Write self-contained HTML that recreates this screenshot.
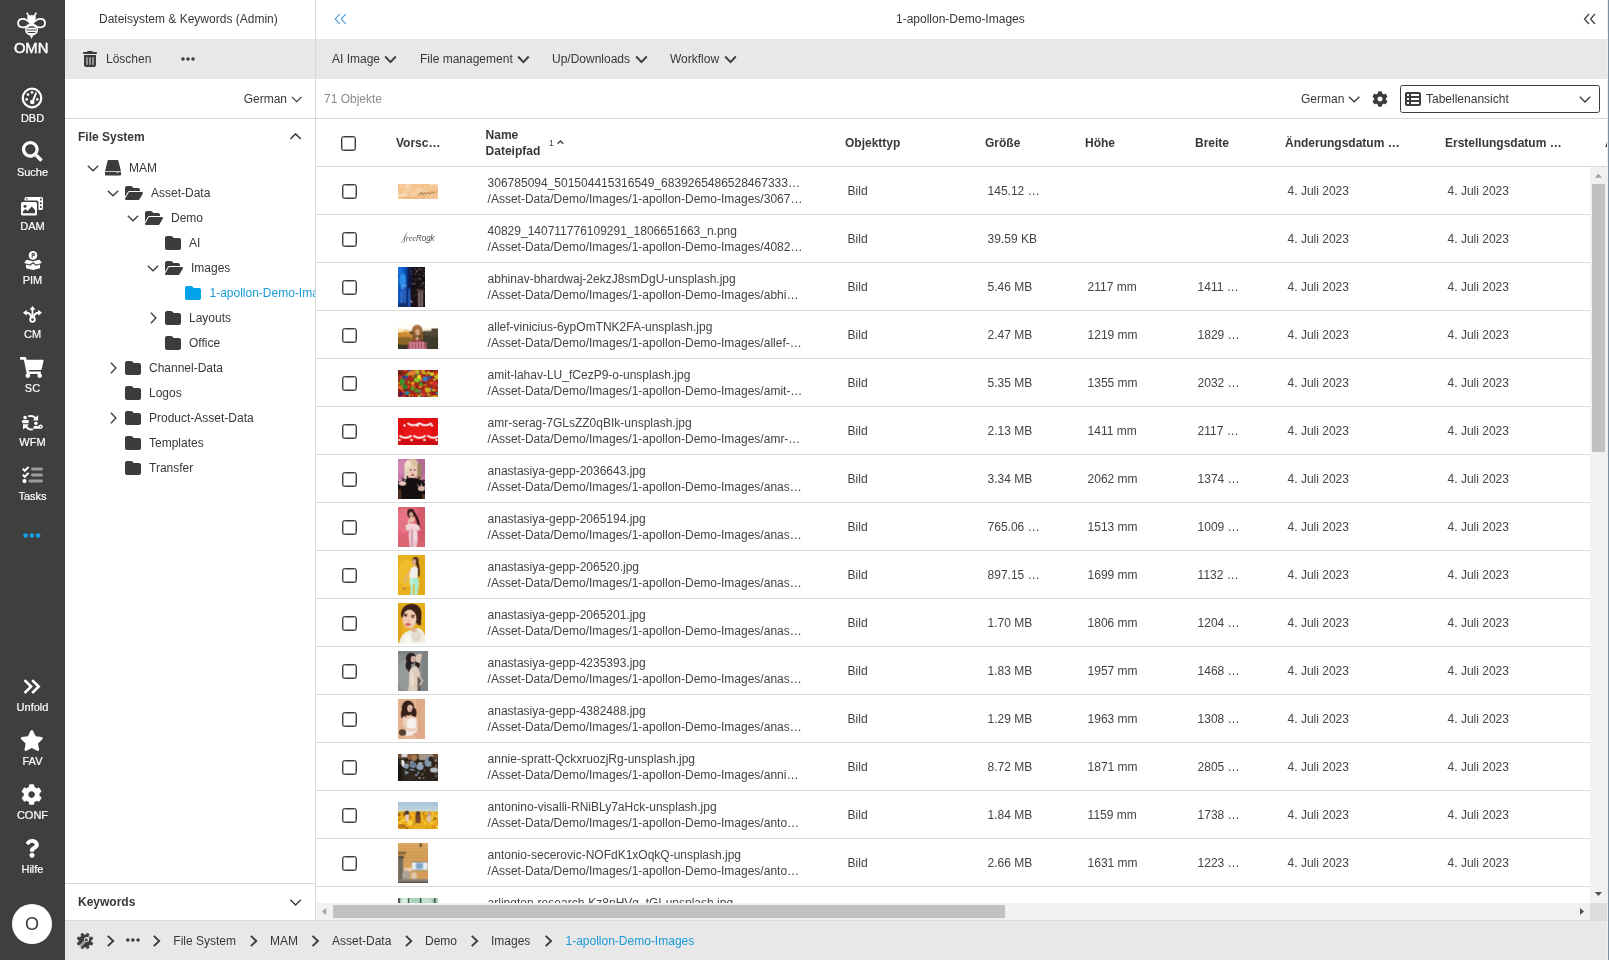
<!DOCTYPE html><html><head><meta charset="utf-8"><title>OMN</title><style>
*{box-sizing:border-box;margin:0;padding:0}
html,body{width:1609px;height:960px;overflow:hidden;background:#fff}
body{font-family:"Liberation Sans",sans-serif;font-size:12px;color:#383838;position:relative;will-change:transform}
.abs{position:absolute}
#sb{position:absolute;left:0;top:0;width:65px;height:960px;background:#3f3f3f;color:#fff}
#sb .it{position:absolute;left:0;width:65px;text-align:center;font-size:11px;line-height:12px;color:#fff;-webkit-text-stroke:0.2px #fff}
#lp{position:absolute;left:65px;top:0;width:251px;height:921px;background:#fff;border-right:1px solid #d9d9d9;overflow:hidden}
.gbar{position:absolute;background:#e8e8e8}
.hl{position:absolute;height:1px;background:#d9d9d9}
.t{position:absolute;white-space:nowrap;line-height:14px}
.b{font-weight:bold}
svg{position:absolute;overflow:visible}
#main{position:absolute;left:316px;top:0;width:1293px;height:921px}
#redge{position:absolute;left:1607px;top:0;width:2px;height:960px;background:#7d909e;border-left:1px solid #ebf0f3}
#tbl{position:absolute;left:316px;top:119px;width:1293px;height:802px;overflow:hidden}
#thead{position:absolute;left:0;top:0;width:1291px;overflow:hidden;height:48px;border-bottom:1px solid #d9d9d9}
#tbody{position:absolute;left:0;top:48px;width:1274px;height:736px;overflow:hidden}
.row{position:absolute;left:0;width:1274px;height:48px;border-bottom:1px solid #d9d9d9}
.cb{position:absolute;left:26px;top:17px;width:15px;height:15px;border:1px solid #3c3c3c;border-radius:2.500px;background:#fff;box-shadow:inset 0 0 0 .45px #4a4a4a}
.nm{position:absolute;left:171.600px;top:8px;color:#444;line-height:16px;white-space:nowrap}
.c{position:absolute;top:17px;color:#444;line-height:14px;white-space:nowrap}
.ot{left:531.600px}.sz{left:671.600px}.ho{left:771.600px}.br{left:881.600px}.d1{left:971.600px}.d2{left:1131.600px}
.th{position:absolute;background-size:cover}
#bc{position:absolute;left:65px;top:921px;width:1544px;height:39px;background:#e8e8e8}
.blue{color:#1a9ad6}

</style></head><body>
<svg style="left:0;top:0;width:0;height:0"><defs><filter id="bl" x="-10%" y="-10%" width="120%" height="120%"><feGaussianBlur stdDeviation="0.75"/></filter><filter id="bls" x="-10%" y="-10%" width="120%" height="120%"><feGaussianBlur stdDeviation="0.5"/></filter><filter id="bl2"><feGaussianBlur stdDeviation="0.3"/></filter></defs></svg>
<div id="sb">
<svg viewBox="0 0 40 50" style="left:12px;top:8px;width:40px;height:50px" fill="none" stroke="#fff">
<path d="M15.100 5.100L16.700 8M24 5.100L22.400 8" stroke-width="1.600" stroke-linecap="round"/>
<path d="M15.300 8.400C15.300 6.700 23.800 6.700 23.800 8.400C24.200 11.300 22.600 13.600 19.550 15.700C16.500 13.600 14.900 11.300 15.300 8.400z" fill="#fff" stroke="none"/>
<path d="M19 16.100C16 12.200 13.200 10.800 10.800 10.800C8 10.800 6.100 12.600 6.100 15.100C6.100 17.600 8 19.400 10.800 19.400C13.500 19.400 16.500 18.600 19 16.100z" stroke-width="1.800"/>
<path d="M20.100 16.100C23.100 12.200 25.900 10.800 28.300 10.800C31.100 10.800 33 12.600 33 15.100C33 17.600 31.100 19.400 28.300 19.400C25.600 19.400 22.600 18.600 20.100 16.100z" stroke-width="1.800"/>
<path d="M19.550 16.200C16 16.500 13.800 18.700 13.800 21.500C13.800 24.500 16 26.500 19.550 27.200C23.100 26.500 25.300 24.500 25.300 21.500C25.300 18.700 23.100 16.500 19.550 16.200z" stroke-width="1.500"/>
<path d="M17.700 17.100h3.700v1.100h-3.700zM15 19.800h9.100v1.600H15zM15 22.400h9.100v1.600H15zM16.300 25h6.500v1.500h-6.500zM17.900 27.200h3.300L19.550 30.900z" fill="#fff" stroke="none"/>
</svg>
<svg viewBox="0 0 40 14" style="left:12px;top:41px;width:40px;height:14px"><text x="1.900" y="11.700" font-family="Liberation Sans" font-size="14.300" fill="#fff" stroke="#fff" stroke-width=".45" textLength="34.400" lengthAdjust="spacingAndGlyphs">OMN</text></svg>
<svg viewBox="0 0 22 22" style="left:21px;top:86.500px;width:22px;height:22px" fill="#fff">
<circle cx="11" cy="11" r="9.300" fill="none" stroke="#fff" stroke-width="2.200"/>
<circle cx="5.600" cy="12.400" r="1.300"/><circle cx="7" cy="7.600" r="1.300"/><circle cx="11" cy="5.400" r="1.300"/><circle cx="16.300" cy="12.400" r="1.300"/>
<path d="M14.300 5.300l1.800.8-3.300 8.300-1.900-.7z"/><circle cx="11.300" cy="15" r="2.300"/>
</svg>
<svg viewBox="0 0 512 512" style="left:21.6px;top:141.2px;width:20.50px;height:20.5px"><path fill="#fff" d="M505 442.7L405.3 343c-4.500-4.500-10.600-7-17-7H372c27.600-35.300 44-79.700 44-128C416 93.100 322.900 0 208 0S0 93.100 0 208s93.100 208 208 208c48.300 0 92.700-16.400 128-44v16.300c0 6.400 2.500 12.500 7 17l99.700 99.700c9.400 9.400 24.600 9.400 33.900 0l28.300-28.300c9.400-9.400 9.400-24.600.1-34zM208 336c-70.700 0-128-57.200-128-128 0-70.700 57.200-128 128-128 70.700 0 128 57.200 128 128 0 70.700-57.200 128-128 128z"/></svg>
<svg viewBox="0 0 22 19" style="left:21px;top:197px;width:22px;height:19px" fill="#fff">
<path d="M5.200 0h15.100c.9 0 1.700.8 1.700 1.700v9.600c0 .9-.8 1.700-1.700 1.700H17.500V5.300c0-1-.8-1.800-1.800-1.800H3.500V1.700C3.500.8 4.300 0 5.200 0z"/>
<path d="M4.900 1.200h1.600v1.400H4.900zM19 1.500h1.600v2H19zM19 5.200h1.600v2H19zM19 8.900h1.600v2H19z" fill="#3f3f3f"/>
<rect x="0" y="5" width="16" height="13.500" rx="1.600"/>
<circle cx="4" cy="9.200" r="1.500" fill="#3f3f3f"/>
<path d="M1.900 16.300v-1.800l2.600-2.600 2 2 4.300-4.300 3.300 3.300v3.400z" fill="#3f3f3f"/>
</svg>
<svg viewBox="0 0 18 19" style="left:23.500px;top:250.500px;width:18px;height:19px" fill="#fff">
<circle cx="9" cy="4.400" r="4.300"/>
<path d="M7.700 6.700V2.100h1.800c1 0 1.600.6 1.600 1.500s-.6 1.500-1.600 1.500h-.8v1.600zm1-2.400h.7c.4 0 .7-.2.700-.7s-.3-.7-.7-.7h-.7z" fill="#3f3f3f"/>
<path d="M2.400 8.800l6.600 1.400 6.600-1.400 2.200 3.200-5.600 1.600L9 11l-3.200 2.600L.2 12z"/>
<path d="M2 13.600l4.200 1.200L9 12.500l2.800 2.300 4.200-1.200v3.600L9 19l-7-1.800z"/>
</svg>
<svg viewBox="0 0 19 17" style="left:22.500px;top:306px;width:19px;height:17px" fill="none" stroke="#fff" stroke-width="1.900">
<circle cx="9.500" cy="13.600" r="2.300"/>
<path d="M9.500 11.200V3"/>
<path d="M8.300 11.500C8 8.500 6.500 6.800 3 6.800M10.700 11.500c.3-3 1.800-4.700 5.300-4.700"/>
<path d="M9.500 0l3 3.800h-6zM0 6.800l3.800-3v6zM19 6.800l-3.800-3v6z" fill="#fff" stroke="none"/>
</svg>
<svg viewBox="0 0 576 512" style="left:20px;top:357px;width:23.62px;height:21px"><path fill="#fff" d="M528.12 301.319l47.273-208C578.806 78.301 567.391 64 551.990 64H159.208l-9.166-44.810C147.758 8.021 137.930 0 126.529 0H24C10.745 0 0 10.745 0 24v16c0 13.255 10.745 24 24 24h69.883l70.248 343.435C147.325 417.100 136 435.222 136 456c0 30.928 25.072 56 56 56s56-25.072 56-56c0-15.674-6.447-29.835-16.824-40h209.647C430.447 426.165 424 440.326 424 456c0 30.928 25.072 56 56 56s56-25.072 56-56c0-22.172-12.888-41.332-31.579-50.405l5.517-24.276c3.413-15.018-8.002-29.319-23.403-29.319H218.117l-6.545-32h293.145c11.206 0 20.920-7.754 23.403-18.681z"/></svg>
<svg viewBox="0 0 20.400 15.400" style="left:21.800px;top:414.600px;width:20.400px;height:15.400px" fill="#fff">
<circle cx="3.100" cy="2.600" r="1.800"/>
<rect x="0" y="5" width="6.800" height="3.300" rx="1.200"/>
<path d="M1 9.200h5.900L5.200 10.900c1.100 2 3.200 2.900 5.700 2.500l.3 1.900c-3.300.6-6.100-.6-7.500-2.900L1 14.600z"/>
<path d="M16.200.1v5.500l-5.300-.3 1.700-1.700C11.200 2 9 1.500 6.600 2.400L5.800.6c3.200-1.200 6.200-.5 8.200 1.600z"/>
<circle cx="13.900" cy="8.200" r="1.750"/>
<path d="M11.300 13.800v-1c0-1.200 1-2.100 2.100-2.100h1c.8 0 1.500.4 1.800 1 .3-1.200 1.300-2.100 2.400-2.100 1.200 0 2.200 1 2.200 2.200 0 1.100-.9 2-2.200 2z"/>
<circle cx="18.600" cy="11.800" r=".7" fill="#3f3f3f"/>
</svg>
<svg viewBox="0 0 21 18" style="left:21.500px;top:466px;width:21px;height:18px">
<g fill="#9c9c9c"><rect x="9" y="1.600" width="12" height="2.800" rx="1.400"/><rect x="9" y="7.600" width="12" height="2.800" rx="1.400"/><rect x="6.500" y="13.600" width="14.500" height="2.800" rx="1.400"/></g>
<g fill="none" stroke="#fff" stroke-width="2" ><path d="M.8 2.800l2 2L6.600.9"/><path d="M.8 8.800l2 2 3.800-3.900"/></g>
<circle cx="2.500" cy="15.100" r="2.100" fill="#fff"/>
</svg>
<svg viewBox="0 0 18 5" style="left:23px;top:533px;width:18px;height:5px" fill="#18a0e6"><circle cx="2.600" cy="2.500" r="2.350"/><circle cx="8.850" cy="2.500" r="2.350"/><circle cx="15.100" cy="2.500" r="2.350"/></svg>
<svg viewBox="0 0 18 16" style="left:22.900px;top:678.700px;width:17.400px;height:15.200px" fill="none" stroke="#fff" stroke-width="2.800"><path d="M1.500 1.200l6.800 6.800-6.800 6.800M9.500 1.200l6.800 6.800-6.800 6.800"/></svg>
<svg viewBox="0 0 576 512" style="left:20.3px;top:730px;width:23.62px;height:21px"><path fill="#fff" d="M259.3 17.800L194 150.200 47.900 171.500c-26.200 3.800-36.700 36.100-17.700 54.600l105.700 103-25 145.500c-4.500 26.300 23.200 46 46.400 33.700L288 439.600l130.700 68.700c23.200 12.200 50.900-7.400 46.400-33.700l-25-145.500 105.700-103c19-18.500 8.500-50.800-17.700-54.600L382 150.200 316.700 17.800c-11.700-23.600-45.600-23.900-57.400 0z"/></svg>
<svg viewBox="0 0 512 512" style="left:21.2px;top:783.8px;width:21.20px;height:21.2px"><path fill="#fff" d="M487.4 315.700l-42.600-24.600c4.300-23.200 4.300-47 0-70.200l42.600-24.600c4.900-2.800 7.100-8.600 5.500-14-11.100-35.600-30-67.800-54.700-94.600-3.800-4.100-10-5.100-14.800-2.300L380.800 110c-17.900-15.400-38.500-27.300-60.800-35.100V25.800c0-5.600-3.900-10.500-9.400-11.700-36.700-8.200-74.300-7.800-109.200 0-5.500 1.200-9.400 6.100-9.400 11.700V75c-22.200 7.900-42.800 19.800-60.800 35.100L88.700 85.500c-4.900-2.800-11-1.900-14.800 2.300-24.700 26.700-43.600 58.900-54.700 94.600-1.700 5.400.6 11.200 5.500 14L67.300 221c-4.300 23.200-4.300 47 0 70.200l-42.600 24.600c-4.900 2.800-7.100 8.600-5.500 14 11.100 35.600 30 67.800 54.700 94.600 3.800 4.100 10 5.100 14.800 2.300l42.600-24.600c17.900 15.400 38.500 27.300 60.800 35.100v49.200c0 5.600 3.900 10.500 9.400 11.700 36.700 8.200 74.300 7.800 109.200 0 5.500-1.200 9.400-6.100 9.400-11.700v-49.200c22.200-7.900 42.800-19.800 60.800-35.100l42.600 24.600c4.900 2.800 11 1.900 14.800-2.300 24.700-26.700 43.600-58.900 54.700-94.600 1.500-5.500-.7-11.300-5.600-14.100zM256 336c-44.100 0-80-35.900-80-80s35.900-80 80-80 80 35.900 80 80-35.900 80-80 80z"/></svg>
<svg viewBox="0 0 384 512" style="left:25px;top:839.3px;width:14.10px;height:18.8px"><path fill="#fff" d="M202.021 0C122.202 0 70.503 32.703 29.914 91.026c-7.363 10.580-5.093 25.086 5.178 32.874l43.138 32.709c10.373 7.865 25.132 6.026 33.253-4.148 25.049-31.381 43.630-49.449 82.757-49.449 30.764 0 68.816 19.799 68.816 49.631 0 22.552-18.617 34.134-48.993 51.164-35.423 19.860-82.299 44.576-82.299 106.405V320c0 13.255 10.745 24 24 24h72.471c13.255 0 24-10.745 24-24v-5.773c0-42.860 125.268-44.645 125.268-160.627C377.504 66.256 286.902 0 202.021 0zM192 373.459c-38.196 0-69.271 31.075-69.271 69.271 0 38.195 31.075 69.270 69.271 69.270s69.271-31.075 69.271-69.271-31.075-69.270-69.271-69.270z"/></svg>
<div class="it" style="top:112px">DBD</div>
<div class="it" style="top:166px">Suche</div>
<div class="it" style="top:220px">DAM</div>
<div class="it" style="top:274px">PIM</div>
<div class="it" style="top:328px">CM</div>
<div class="it" style="top:382px">SC</div>
<div class="it" style="top:436px">WFM</div>
<div class="it" style="top:490px">Tasks</div>
<div class="it" style="top:701px">Unfold</div>
<div class="it" style="top:755px">FAV</div>
<div class="it" style="top:809px">CONF</div>
<div class="it" style="top:863px">Hilfe</div>
<div class="abs" style="left:12px;top:904px;width:40px;height:40px;border-radius:20px;background:#fff;color:#3c3c3c;font-size:18px;line-height:40px;text-align:center">O</div>
</div>
<div id="lp">
<div class="t" style="left:34px;top:12px">Dateisystem &amp; Keywords (Admin)</div>
<div class="gbar" style="left:0;top:39px;width:250px;height:40px"></div>
<svg viewBox="0 0 448 512" style="left:18px;top:51px;width:14.00px;height:16px"><path fill="#3c3c3c" d="M135.200 17.700C140.600 6.800 151.700 0 163.800 0H284.200c12.100 0 23.200 6.800 28.600 17.700L320 32h96c17.700 0 32 14.300 32 32s-14.300 32-32 32H32C14.300 96 0 81.700 0 64S14.300 32 32 32h96l7.200-14.300zM32 128H416V448c0 35.300-28.700 64-64 64H96c-35.300 0-64-28.700-64-64V128zm96 64c-8.800 0-16 7.200-16 16V432c0 8.800 7.200 16 16 16s16-7.200 16-16V208c0-8.800-7.200-16-16-16zm96 0c-8.800 0-16 7.200-16 16V432c0 8.800 7.200 16 16 16s16-7.200 16-16V208c0-8.800-7.200-16-16-16zm96 0c-8.800 0-16 7.200-16 16V432c0 8.800 7.200 16 16 16s16-7.200 16-16V208c0-8.800-7.200-16-16-16z"/></svg>
<div class="t" style="left:41px;top:52px">Löschen</div>
<svg viewBox="0 0 14 4" style="left:115.6px;top:57px;width:14px;height:4px" fill="#3c3c3c"><circle cx="2" cy="2" r="1.750"/><circle cx="7" cy="2" r="1.750"/><circle cx="12" cy="2" r="1.750"/></svg>
<div class="t" style="left:178.700px;top:92px">German</div>
<svg style="left:0;top:0;width:1px;height:1px"><path d="M226.90 96.90L231.70 101.70L236.50 96.90" fill="none" stroke="#3c3c3c" stroke-width="1.25"/></svg>
<div class="hl" style="left:0;top:118px;width:250px"></div>
<div class="t b" style="left:13px;top:130px">File System</div>
<svg style="left:0;top:0;width:1px;height:1px"><path d="M225.40 139.10L230.60 133.90L235.80 139.10" fill="none" stroke="#3c3c3c" stroke-width="1.45"/></svg>
<svg style="left:0;top:0;width:1px;height:1px"><path d="M22.80 165.80L28.00 170.80L33.20 165.80" fill="none" stroke="#3c3c3c" stroke-width="1.35"/></svg>
<svg viewBox="0 0 16 15.600" style="left:40px;top:160.2px;width:16px;height:15.600px" fill="#3c3c3c"><path d="M3.600 0h8.800c.5 0 .9.300 1 .800L15.900 11H.1L2.600.8c.1-.5.500-.8 1-.8z"/><path d="M0 11.800h16v2.600c0 .7-.5 1.200-1.200 1.200H1.200C.5 15.600 0 15.100 0 14.400z"/><rect x="11.200" y="11.800" width="2.700" height="1.300" fill="#aaa"/></svg>
<div class="t" style="left:64px;top:161px">MAM</div>
<svg style="left:0;top:0;width:1px;height:1px"><path d="M42.80 190.80L48.00 195.80L53.20 190.80" fill="none" stroke="#3c3c3c" stroke-width="1.35"/></svg>
<svg viewBox="0 0 576 512" style="left:60px;top:185px;width:18.00px;height:16px"><path fill="#3c3c3c" d="M88.700 223.800L0 375.800V96C0 60.700 28.700 32 64 32H181.500c17 0 33.300 6.700 45.300 18.700l26.500 26.500c12 12 28.300 18.700 45.300 18.700H416c35.300 0 64 28.700 64 64v32H144c-22.800 0-43.800 12.100-55.300 31.800zm27.600 16.100C122.100 230 132.600 224 144 224H544c11.500 0 22 6.100 27.700 16.100s5.700 22.200-.1 32.100l-112 192C453.900 474 443.400 480 432 480H32c-11.500 0-22-6.100-27.700-16.100s-5.700-22.200 .1-32.100l112-192z"/></svg>
<div class="t" style="left:86px;top:186px">Asset-Data</div>
<svg style="left:0;top:0;width:1px;height:1px"><path d="M62.80 215.80L68.00 220.80L73.20 215.80" fill="none" stroke="#3c3c3c" stroke-width="1.35"/></svg>
<svg viewBox="0 0 576 512" style="left:80px;top:210px;width:18.00px;height:16px"><path fill="#3c3c3c" d="M88.700 223.800L0 375.800V96C0 60.700 28.700 32 64 32H181.500c17 0 33.300 6.700 45.300 18.700l26.500 26.500c12 12 28.300 18.700 45.300 18.700H416c35.300 0 64 28.700 64 64v32H144c-22.800 0-43.800 12.100-55.300 31.800zm27.600 16.100C122.100 230 132.600 224 144 224H544c11.500 0 22 6.100 27.700 16.100s5.700 22.200-.1 32.100l-112 192C453.900 474 443.400 480 432 480H32c-11.500 0-22-6.100-27.700-16.100s-5.700-22.200 .1-32.100l112-192z"/></svg>
<div class="t" style="left:106px;top:211px">Demo</div>
<svg viewBox="0 0 512 512" style="left:100px;top:235px;width:16.00px;height:16px"><path fill="#3c3c3c" d="M64 480H448c35.300 0 64-28.700 64-64V160c0-35.300-28.700-64-64-64H288c-10.100 0-19.600-4.700-25.600-12.800L243.200 57.600C231.100 41.500 212.100 32 192 32H64C28.700 32 0 60.700 0 96V416c0 35.300 28.700 64 64 64z"/></svg>
<div class="t" style="left:124px;top:236px">AI</div>
<svg style="left:0;top:0;width:1px;height:1px"><path d="M82.80 265.80L88.00 270.80L93.20 265.80" fill="none" stroke="#3c3c3c" stroke-width="1.35"/></svg>
<svg viewBox="0 0 576 512" style="left:100px;top:260px;width:18.00px;height:16px"><path fill="#3c3c3c" d="M88.700 223.800L0 375.800V96C0 60.700 28.700 32 64 32H181.500c17 0 33.300 6.700 45.300 18.700l26.500 26.500c12 12 28.300 18.700 45.300 18.700H416c35.300 0 64 28.700 64 64v32H144c-22.800 0-43.800 12.100-55.300 31.800zm27.600 16.100C122.100 230 132.600 224 144 224H544c11.500 0 22 6.100 27.700 16.100s5.700 22.200-.1 32.100l-112 192C453.900 474 443.400 480 432 480H32c-11.500 0-22-6.100-27.700-16.100s-5.700-22.200 .1-32.100l112-192z"/></svg>
<div class="t" style="left:126px;top:261px">Images</div>
<svg viewBox="0 0 512 512" style="left:120px;top:285px;width:16.00px;height:16px"><path fill="#00a2e8" d="M64 480H448c35.300 0 64-28.700 64-64V160c0-35.300-28.700-64-64-64H288c-10.100 0-19.600-4.700-25.600-12.800L243.200 57.600C231.100 41.500 212.100 32 192 32H64C28.700 32 0 60.700 0 96V416c0 35.300 28.700 64 64 64z"/></svg>
<div class="t blue" style="left:144.5px;top:286px">1-apollon-Demo-Images</div>
<svg style="left:0;top:0;width:1px;height:1px"><path d="M85.90 312.80L90.90 318.00L85.90 323.20" fill="none" stroke="#3c3c3c" stroke-width="1.35"/></svg>
<svg viewBox="0 0 512 512" style="left:100px;top:310px;width:16.00px;height:16px"><path fill="#3c3c3c" d="M64 480H448c35.300 0 64-28.700 64-64V160c0-35.300-28.700-64-64-64H288c-10.100 0-19.600-4.700-25.600-12.800L243.200 57.600C231.100 41.500 212.100 32 192 32H64C28.700 32 0 60.700 0 96V416c0 35.300 28.700 64 64 64z"/></svg>
<div class="t" style="left:124px;top:311px">Layouts</div>
<svg viewBox="0 0 512 512" style="left:100px;top:335px;width:16.00px;height:16px"><path fill="#3c3c3c" d="M64 480H448c35.300 0 64-28.700 64-64V160c0-35.300-28.700-64-64-64H288c-10.100 0-19.600-4.700-25.600-12.800L243.200 57.600C231.100 41.500 212.100 32 192 32H64C28.700 32 0 60.700 0 96V416c0 35.300 28.700 64 64 64z"/></svg>
<div class="t" style="left:124px;top:336px">Office</div>
<svg style="left:0;top:0;width:1px;height:1px"><path d="M45.90 362.80L50.90 368.00L45.90 373.20" fill="none" stroke="#3c3c3c" stroke-width="1.35"/></svg>
<svg viewBox="0 0 512 512" style="left:60px;top:360px;width:16.00px;height:16px"><path fill="#3c3c3c" d="M64 480H448c35.300 0 64-28.700 64-64V160c0-35.300-28.700-64-64-64H288c-10.100 0-19.600-4.700-25.600-12.800L243.200 57.600C231.100 41.500 212.100 32 192 32H64C28.700 32 0 60.700 0 96V416c0 35.300 28.700 64 64 64z"/></svg>
<div class="t" style="left:84px;top:361px">Channel-Data</div>
<svg viewBox="0 0 512 512" style="left:60px;top:385px;width:16.00px;height:16px"><path fill="#3c3c3c" d="M64 480H448c35.300 0 64-28.700 64-64V160c0-35.300-28.700-64-64-64H288c-10.100 0-19.600-4.700-25.600-12.800L243.200 57.600C231.100 41.500 212.100 32 192 32H64C28.700 32 0 60.700 0 96V416c0 35.300 28.700 64 64 64z"/></svg>
<div class="t" style="left:84px;top:386px">Logos</div>
<svg style="left:0;top:0;width:1px;height:1px"><path d="M45.90 412.80L50.90 418.00L45.90 423.20" fill="none" stroke="#3c3c3c" stroke-width="1.35"/></svg>
<svg viewBox="0 0 512 512" style="left:60px;top:410px;width:16.00px;height:16px"><path fill="#3c3c3c" d="M64 480H448c35.300 0 64-28.700 64-64V160c0-35.300-28.700-64-64-64H288c-10.100 0-19.600-4.700-25.600-12.800L243.200 57.600C231.100 41.500 212.100 32 192 32H64C28.700 32 0 60.700 0 96V416c0 35.300 28.700 64 64 64z"/></svg>
<div class="t" style="left:84px;top:411px">Product-Asset-Data</div>
<svg viewBox="0 0 512 512" style="left:60px;top:435px;width:16.00px;height:16px"><path fill="#3c3c3c" d="M64 480H448c35.300 0 64-28.700 64-64V160c0-35.300-28.700-64-64-64H288c-10.100 0-19.600-4.700-25.600-12.800L243.200 57.600C231.100 41.500 212.100 32 192 32H64C28.700 32 0 60.700 0 96V416c0 35.300 28.700 64 64 64z"/></svg>
<div class="t" style="left:84px;top:436px">Templates</div>
<svg viewBox="0 0 512 512" style="left:60px;top:460px;width:16.00px;height:16px"><path fill="#3c3c3c" d="M64 480H448c35.300 0 64-28.700 64-64V160c0-35.300-28.700-64-64-64H288c-10.100 0-19.600-4.700-25.600-12.800L243.200 57.600C231.100 41.500 212.100 32 192 32H64C28.700 32 0 60.700 0 96V416c0 35.300 28.700 64 64 64z"/></svg>
<div class="t" style="left:84px;top:461px">Transfer</div>
<div class="hl" style="left:0;top:883px;width:250px"></div>
<div class="t b" style="left:13px;top:895px">Keywords</div>
<svg style="left:0;top:0;width:1px;height:1px"><path d="M225.40 899.70L230.60 904.90L235.80 899.70" fill="none" stroke="#3c3c3c" stroke-width="1.45"/></svg>
<div class="hl" style="left:0;top:920px;width:250px"></div>
</div>
<div id="main">
<svg style="left:0;top:0;width:1px;height:1px"><path d="M23.80 14.00L19.30 19.00L23.80 24.00M29.80 14.00L25.30 19.00L29.80 24.00" fill="none" stroke="#3a8fd1" stroke-width="1.1"/></svg>
<div class="t" style="left:580px;top:12px">1-apollon-Demo-Images</div>
<svg style="left:0;top:0;width:1px;height:1px"><path d="M1273.00 14.00L1268.50 19.00L1273.00 24.00M1279.00 14.00L1274.50 19.00L1279.00 24.00" fill="none" stroke="#3c3c3c" stroke-width="1.2"/></svg>
<div class="gbar" style="left:0;top:39px;width:1291px;height:40px"></div>
<div class="t" style="left:16px;top:52px">AI Image</div>
<svg style="left:0;top:0;width:1px;height:1px"><path d="M69.20 56.50L74.50 62.10L79.80 56.50" fill="none" stroke="#3c3c3c" stroke-width="1.9"/></svg>
<div class="t" style="left:104px;top:52px">File management</div>
<svg style="left:0;top:0;width:1px;height:1px"><path d="M202.10 56.50L207.40 62.10L212.70 56.50" fill="none" stroke="#3c3c3c" stroke-width="1.9"/></svg>
<div class="t" style="left:236px;top:52px">Up/Downloads</div>
<svg style="left:0;top:0;width:1px;height:1px"><path d="M320.20 56.50L325.50 62.10L330.80 56.50" fill="none" stroke="#3c3c3c" stroke-width="1.9"/></svg>
<div class="t" style="left:354px;top:52px">Workflow</div>
<svg style="left:0;top:0;width:1px;height:1px"><path d="M409.20 56.50L414.50 62.10L419.80 56.50" fill="none" stroke="#3c3c3c" stroke-width="1.9"/></svg>
<div class="t" style="left:8px;top:92px;color:#8c8c8c">71 Objekte</div>
<div class="t" style="left:985px;top:92px">German</div>
<svg style="left:0;top:0;width:1px;height:1px"><path d="M1033.00 96.80L1038.20 101.80L1043.40 96.80" fill="none" stroke="#3c3c3c" stroke-width="1.35"/></svg>
<svg viewBox="0 0 512 512" style="left:1056px;top:91px;width:16.00px;height:16px"><path fill="#3c3c3c" d="M487.4 315.700l-42.600-24.600c4.300-23.200 4.300-47 0-70.200l42.600-24.600c4.900-2.800 7.100-8.600 5.500-14-11.100-35.600-30-67.800-54.700-94.600-3.800-4.100-10-5.100-14.800-2.300L380.800 110c-17.900-15.400-38.500-27.300-60.800-35.100V25.800c0-5.600-3.900-10.500-9.400-11.700-36.700-8.200-74.300-7.800-109.200 0-5.500 1.200-9.400 6.100-9.400 11.700V75c-22.200 7.900-42.800 19.800-60.800 35.100L88.700 85.500c-4.900-2.800-11-1.900-14.800 2.300-24.700 26.700-43.600 58.900-54.700 94.600-1.700 5.400.6 11.200 5.500 14L67.300 221c-4.300 23.200-4.300 47 0 70.200l-42.600 24.600c-4.900 2.800-7.100 8.600-5.500 14 11.100 35.600 30 67.800 54.700 94.600 3.800 4.100 10 5.100 14.800 2.300l42.600-24.600c17.900 15.400 38.500 27.300 60.800 35.100v49.200c0 5.600 3.900 10.500 9.400 11.700 36.700 8.200 74.300 7.800 109.200 0 5.500-1.200 9.400-6.100 9.400-11.700v-49.200c22.200-7.900 42.800-19.800 60.800-35.100l42.600 24.600c4.900 2.800 11 1.900 14.800-2.300 24.700-26.700 43.600-58.900 54.700-94.600 1.500-5.500-.7-11.300-5.600-14.100zM256 336c-44.100 0-80-35.900-80-80s35.900-80 80-80 80 35.900 80 80-35.900 80-80 80z"/></svg>
<div class="abs" style="left:1084px;top:85px;width:200px;height:28px;border:1px solid #3c3c3c;border-radius:2.5px"></div>
<svg viewBox="0 0 512 512" style="left:1089px;top:91px;width:16.00px;height:16px"><path fill="#3c3c3c" d="M0 96C0 60.700 28.700 32 64 32H448c35.300 0 64 28.700 64 64V416c0 35.300-28.700 64-64 64H64c-35.300 0-64-28.700-64-64V96zm64 0v64h64V96H64zm384 0H192v64H448V96zM64 224v64h64V224H64zm384 0H192v64H448V224zM64 352v64h64V352H64zm384 0H192v64H448V352z"/></svg>
<div class="t" style="left:1110px;top:92px">Tabellenansicht</div>
<svg style="left:0;top:0;width:1px;height:1px"><path d="M1263.80 96.70L1269.00 101.90L1274.20 96.70" fill="none" stroke="#3c3c3c" stroke-width="1.4"/></svg>
<div class="hl" style="left:0;top:118px;width:1291px"></div>
</div>
<div id="tbl">
<div id="thead">
<span class="cb" style="left:25px;top:17px"></span>
<div class="t b" style="left:80px;top:17px">Vorsc…</div>
<div class="t b" style="left:169.600px;top:9px">Name</div>
<div class="t b" style="left:169.600px;top:25px">Dateipfad</div>
<div class="t" style="left:233px;top:18.800px;font-size:8.500px;line-height:10px">1</div>
<svg style="left:0;top:0;width:1px;height:1px"><path d="M241.600 24.800L244.400 22L247.200 24.800" fill="none" stroke="#3c3c3c" stroke-width="1.300"/></svg>
<div class="t b" style="left:529px;top:17px">Objekttyp</div>
<div class="t b" style="left:669px;top:17px">Größe</div>
<div class="t b" style="left:769px;top:17px">Höhe</div>
<div class="t b" style="left:879px;top:17px">Breite</div>
<div class="t b" style="left:969px;top:17px">Änderungsdatum …</div>
<div class="t b" style="left:1129px;top:17px">Erstellungsdatum …</div>
<div class="t b" style="left:1289px;top:17px">A</div>
</div>
<div id="tbody">
<div class="row" style="top:0px"><span class="cb"></span><svg class="th" viewBox="0 0 40 15" style="left:82px;top:17px;width:40px;height:15px;overflow:hidden"><defs><g id="tg1"><rect x="-2" y="-2" width="44" height="19" fill="#f3c48f"/><ellipse cx="6.6" cy="10.3" rx="3.1" ry="1.7" fill="#f6cea0"/><ellipse cx="39.6" cy="7.1" rx="3.9" ry="1.3" fill="#f1bf88"/><ellipse cx="9.4" cy="0.0" rx="2.4" ry="1.9" fill="#f8d6ac"/><ellipse cx="5.8" cy="11.3" rx="3.8" ry="2.0" fill="#f9dab4"/><ellipse cx="39.9" cy="11.1" rx="3.7" ry="1.9" fill="#f8d6ac"/><ellipse cx="38.3" cy="8.1" rx="3.2" ry="2.0" fill="#efba80"/><ellipse cx="0.9" cy="11.1" rx="1.7" ry="2.2" fill="#f8d6ac"/><ellipse cx="18.1" cy="8.3" rx="2.4" ry="1.7" fill="#f6cea0"/><ellipse cx="26.6" cy="7.0" rx="3.6" ry="1.1" fill="#f6cea0"/><ellipse cx="8.3" cy="14.5" rx="3.7" ry="2.1" fill="#f1bf88"/><ellipse cx="39.6" cy="1.1" rx="2.9" ry="1.8" fill="#f9dab4"/><ellipse cx="8.0" cy="13.8" rx="3.7" ry="1.6" fill="#efba80"/><ellipse cx="38.2" cy="7.5" rx="2.3" ry="1.7" fill="#efba80"/><ellipse cx="1.1" cy="1.4" rx="3.3" ry="2.5" fill="#f9dab4"/><ellipse cx="0.1" cy="1.1" rx="3.0" ry="1.8" fill="#f1bf88"/><ellipse cx="24.4" cy="8.3" rx="3.1" ry="1.3" fill="#f6cea0"/><ellipse cx="25.1" cy="12.5" rx="2.3" ry="2.1" fill="#efba80"/><ellipse cx="9.8" cy="2.5" rx="3.8" ry="1.3" fill="#f9dab4"/><ellipse cx="15.0" cy="10.3" rx="3.2" ry="2.3" fill="#f6cea0"/><ellipse cx="16.3" cy="14.8" rx="3.9" ry="1.9" fill="#efba80"/><ellipse cx="19.6" cy="5.6" rx="2.1" ry="2.3" fill="#f6cea0"/><ellipse cx="22.5" cy="6.6" rx="2.5" ry="2.1" fill="#f8d6ac"/><ellipse cx="33.5" cy="0.8" rx="2.1" ry="1.4" fill="#f9dab4"/><ellipse cx="9.9" cy="5.9" rx="3.7" ry="2.0" fill="#f6cea0"/><ellipse cx="39.3" cy="11.2" rx="2.7" ry="1.4" fill="#f5c896"/><ellipse cx="21.0" cy="10.9" rx="1.6" ry="1.3" fill="#efba80"/><path d="M21.500 11c1-2.500 2-3.500 2.600-2.500s-.3 2.500.8 1.800 1.500-2 2.300-1.500.3 1.800 1.300 1.200 1.300-2.200 2.200-1.600.2 2 1.200 1.500 1.600-2.400 2.500-1.800.8 1.600 2 .6" stroke="#8a5c34" stroke-width=".85" fill="none"/></g></defs><use href="#tg1" x="-0.31" y="-0.31" opacity="1"/><use href="#tg1" x="0.31" y="-0.31" opacity="0.5"/><use href="#tg1" x="-0.31" y="0.31" opacity="0.3333"/><use href="#tg1" x="0.31" y="0.31" opacity="0.25"/></svg><div class="nm"><div>306785094_501504415316549_6839265486528467333…</div><div>/Asset-Data/Demo/Images/1-apollon-Demo-Images/3067…</div></div><span class="c ot">Bild</span><span class="c sz">145.12 …</span><span class="c ho"></span><span class="c br"></span><span class="c d1">4. Juli 2023</span><span class="c d2">4. Juli 2023</span></div>
<div class="row" style="top:48px"><span class="cb"></span><svg class="th" viewBox="0 0 40 14" style="left:82px;top:15px;width:40px;height:14px"><g filter="url(#bl2)"><text x="5.500" y="10.800" font-family="Liberation Serif" font-style="italic" font-size="9" fill="#555" textLength="12.500" lengthAdjust="spacingAndGlyphs">free</text><text x="18" y="10.800" font-family="Liberation Sans" font-style="italic" font-size="9" fill="#4a4a4a" textLength="18.500" lengthAdjust="spacingAndGlyphs">Rogk</text><path d="M3 13C5.500 10 7 6 9.200 2.200" stroke="#666" stroke-width=".55" fill="none"/><path d="M27 12.200l2.500.8" stroke="#444" stroke-width=".6"/></g></svg><div class="nm"><div>40829_140711776109291_1806651663_n.png</div><div>/Asset-Data/Demo/Images/1-apollon-Demo-Images/4082…</div></div><span class="c ot">Bild</span><span class="c sz">39.59 KB</span><span class="c ho"></span><span class="c br"></span><span class="c d1">4. Juli 2023</span><span class="c d2">4. Juli 2023</span></div>
<div class="row" style="top:96px"><span class="cb"></span><svg class="th" viewBox="0 0 27 40" style="left:82px;top:4px;width:27px;height:40px;overflow:hidden"><defs><g id="tg2"><rect x="-2" y="-2" width="31" height="44" fill="#160f12"/><rect x="-2" y="-2" width="10.5" height="44" fill="#0b57c0"/><ellipse cx="4.5" cy="13" rx="3.5" ry="7" fill="#2f8ee8"/><ellipse cx="2" cy="4" rx="3" ry="4" fill="#1a70d8"/><ellipse cx="6" cy="20" rx="3" ry="3" fill="#4a9ae6"/><path d="M2 42L5.500 21L9 19L12.500 22L13 42z" fill="#1d4fae"/><rect x="8.5" y="-2" width="2.2" height="44" fill="#0e2f78"/><rect x="3" y="24" width="1" height="16" fill="#5a8cd8"/><rect x="6" y="23" width="1" height="17" fill="#3f76cc"/><rect x="10.5" y="24" width="1" height="16" fill="#3a6cc0"/><rect x="11" y="0" width="3" height="20" fill="#0d1c4a"/><rect x="18.8" y="22.3" width="1.7" height="0.9" fill="#a08888"/><rect x="24.5" y="8.2" width="1.6" height="0.9" fill="#a08888"/><rect x="23.6" y="4.6" width="1.1" height="0.7" fill="#584040"/><rect x="21.4" y="23.6" width="1.2" height="0.9" fill="#584040"/><rect x="21.1" y="7.0" width="0.8" height="0.9" fill="#b8a8a8"/><rect x="13.0" y="34.4" width="1.4" height="1.1" fill="#d8c8c0"/><rect x="18.7" y="33.0" width="1.3" height="1.0" fill="#6a5050"/><rect x="12.6" y="4.2" width="1.5" height="0.8" fill="#a08888"/><rect x="26.4" y="32.9" width="1.5" height="0.8" fill="#8a7474"/><rect x="19.7" y="2.1" width="1.4" height="0.7" fill="#b8a8a8"/><rect x="24.4" y="15.7" width="1.8" height="1.1" fill="#b8a8a8"/><rect x="15.5" y="36.2" width="0.9" height="0.8" fill="#584040"/><rect x="18.1" y="3.8" width="1.4" height="1.1" fill="#d8c8c0"/><rect x="17.2" y="12.8" width="0.8" height="0.8" fill="#b8a8a8"/><rect x="14.4" y="27.9" width="0.8" height="0.9" fill="#6a5050"/><rect x="15.0" y="22.3" width="1.2" height="0.7" fill="#584040"/><rect x="23.3" y="16.9" width="1.2" height="0.8" fill="#8a7474"/><rect x="12.5" y="33.8" width="1.8" height="1.0" fill="#b8a8a8"/><rect x="15.4" y="16.0" width="1.7" height="1.0" fill="#b8a8a8"/><rect x="13.1" y="6.6" width="1.2" height="0.6" fill="#a08888"/><rect x="17.1" y="12.3" width="0.9" height="0.7" fill="#a08888"/><rect x="21.4" y="1.6" width="1.2" height="1.0" fill="#8a7474"/><rect x="25.9" y="19.4" width="1.4" height="1.1" fill="#8a7474"/><rect x="21.3" y="12.8" width="1.0" height="1.0" fill="#584040"/><rect x="15.2" y="29.1" width="1.7" height="0.7" fill="#6a5050"/><rect x="24.9" y="23.9" width="1.2" height="0.7" fill="#b8a8a8"/><rect x="19.7" y="10.7" width="1.5" height="0.8" fill="#6a5050"/><rect x="24.0" y="23.7" width="1.1" height="0.7" fill="#584040"/><rect x="26.2" y="5.8" width="1.3" height="1.0" fill="#a08888"/><rect x="21.1" y="11.6" width="1.7" height="0.7" fill="#b8a8a8"/><rect x="13.5" y="16.6" width="1.0" height="0.6" fill="#d8c8c0"/><rect x="17.7" y="22.7" width="0.9" height="0.8" fill="#6a5050"/><rect x="26.2" y="26.0" width="1.5" height="1.0" fill="#8a7474"/><rect x="20.8" y="36.1" width="1.3" height="0.8" fill="#d8c8c0"/><rect x="26.0" y="1.8" width="1.4" height="0.9" fill="#584040"/><rect x="16.9" y="6.2" width="0.9" height="0.9" fill="#d8c8c0"/><rect x="22.8" y="35.2" width="1.5" height="1.0" fill="#d8c8c0"/><rect x="17.4" y="27.0" width="1.7" height="1.1" fill="#6a5050"/><rect x="25.7" y="2.2" width="1.3" height="0.6" fill="#584040"/><rect x="17.9" y="23.1" width="1.4" height="0.6" fill="#584040"/><rect x="14.1" y="10.8" width="1.2" height="0.8" fill="#584040"/><rect x="22.2" y="18.4" width="1.3" height="0.9" fill="#a08888"/><rect x="23.0" y="2.1" width="1.4" height="0.9" fill="#8a7474"/><rect x="25.9" y="5.3" width="1.6" height="1.0" fill="#6a5050"/><rect x="16.1" y="1.4" width="1.1" height="1.0" fill="#8a7474"/><rect x="19.8" y="29.6" width="1.1" height="1.2" fill="#6a5050"/><rect x="19.5" y="22" width="6" height="18" fill="#4a3838"/><rect x="21" y="24" width="0.8" height="16" fill="#c8b8b0"/><rect x="23.5" y="24" width="0.8" height="16" fill="#a89890"/><ellipse cx="3.5" cy="38.5" rx="2.2" ry="1.3" fill="#b05858"/><rect x="0" y="36" width="9" height="4" fill="#14306a"/></g></defs><use href="#tg2" x="-0.53" y="-0.53" opacity="1"/><use href="#tg2" x="0.53" y="-0.53" opacity="0.5"/><use href="#tg2" x="-0.53" y="0.53" opacity="0.3333"/><use href="#tg2" x="0.53" y="0.53" opacity="0.25"/></svg><div class="nm"><div>abhinav-bhardwaj-2ekzJ8smDgU-unsplash.jpg</div><div>/Asset-Data/Demo/Images/1-apollon-Demo-Images/abhi…</div></div><span class="c ot">Bild</span><span class="c sz">5.46 MB</span><span class="c ho">2117 mm</span><span class="c br">1411 …</span><span class="c d1">4. Juli 2023</span><span class="c d2">4. Juli 2023</span></div>
<div class="row" style="top:144px"><span class="cb"></span><svg class="th" viewBox="0 0 40 27" style="left:82px;top:11px;width:40px;height:27px;overflow:hidden"><defs><g id="tg3"><rect x="-2" y="-2" width="44" height="12" fill="#fffdf8"/><rect x="-2" y="8.5" width="44" height="22" fill="#3b3526"/><path d="M-2 8.500C6 7 12 6.500 18 7.500L42 6.500V9.500H-2z" fill="#efe3cd"/><ellipse cx="1" cy="11" rx="11" ry="3.5" fill="#eebb62"/><ellipse cx="3" cy="14.5" rx="13" ry="4.5" fill="#c98a32"/><ellipse cx="6" cy="19" rx="12" ry="4" fill="#8a6428"/><ellipse cx="-1" cy="8.5" rx="8" ry="2" fill="#fbe6b8"/><rect x="33.5" y="6.5" width="8" height="9" fill="#4d4432"/><rect x="26" y="9" width="9" height="5" fill="#554a36"/><ellipse cx="30" cy="20" rx="10" ry="6" fill="#3f3a2a"/><ellipse cx="19.2" cy="8.5" rx="5.2" ry="5.5" fill="#93602f"/><ellipse cx="19.5" cy="10.2" rx="2.7" ry="3.3" fill="#d7a47c"/><rect x="14.5" y="10" width="3" height="9" fill="#8a5a2c"/><rect x="22" y="10" width="3" height="8" fill="#8a5a2c"/><ellipse cx="19" cy="5" rx="3.5" ry="2" fill="#a87040"/><path d="M9.500 27.500c0-6 4-9.500 10-9.500s9.500 3.500 9.500 9.500z" fill="#a23348"/><rect x="12.5" y="19.5" width="0.9" height="8" fill="#e4b6c0"/><rect x="15.5" y="19.5" width="0.9" height="8" fill="#e4b6c0"/><rect x="18.5" y="19.5" width="0.9" height="8" fill="#e4b6c0"/><rect x="21.5" y="19.5" width="0.9" height="8" fill="#e4b6c0"/><rect x="24.5" y="19.5" width="0.9" height="8" fill="#e4b6c0"/><rect x="10" y="20.5" width="19" height="0.8" fill="#d9a4b0"/><rect x="10" y="23" width="19" height="0.8" fill="#d9a4b0"/><rect x="10" y="25.5" width="19" height="0.8" fill="#d9a4b0"/><ellipse cx="19.3" cy="16.5" rx="1.8" ry="2" fill="#d7a47c"/></g></defs><use href="#tg3" x="-0.53" y="-0.53" opacity="1"/><use href="#tg3" x="0.53" y="-0.53" opacity="0.5"/><use href="#tg3" x="-0.53" y="0.53" opacity="0.3333"/><use href="#tg3" x="0.53" y="0.53" opacity="0.25"/></svg><div class="nm"><div>allef-vinicius-6ypOmTNK2FA-unsplash.jpg</div><div>/Asset-Data/Demo/Images/1-apollon-Demo-Images/allef-…</div></div><span class="c ot">Bild</span><span class="c sz">2.47 MB</span><span class="c ho">1219 mm</span><span class="c br">1829 …</span><span class="c d1">4. Juli 2023</span><span class="c d2">4. Juli 2023</span></div>
<div class="row" style="top:192px"><span class="cb"></span><svg class="th" viewBox="0 0 40 27" style="left:82px;top:11px;width:40px;height:27px;overflow:hidden"><defs><g id="tg4"><rect x="-2" y="-2" width="44" height="31" fill="#a02818"/><ellipse cx="13.0" cy="4.1" rx="1.8" ry="1.3" fill="#b0b828"/><ellipse cx="3.8" cy="15.7" rx="2.1" ry="1.6" fill="#e05a1c"/><ellipse cx="17.3" cy="1.9" rx="1.1" ry="1.0" fill="#d84818"/><ellipse cx="22.6" cy="25.6" rx="1.8" ry="1.6" fill="#c82414"/><ellipse cx="23.1" cy="10.7" rx="2.2" ry="1.6" fill="#d84818"/><ellipse cx="5.3" cy="11.3" rx="1.6" ry="1.5" fill="#b0b828"/><ellipse cx="32.6" cy="4.9" rx="1.7" ry="1.6" fill="#2468b8"/><ellipse cx="3.9" cy="19.2" rx="1.7" ry="1.6" fill="#e06c28"/><ellipse cx="27.2" cy="11.5" rx="1.4" ry="1.3" fill="#e06c28"/><ellipse cx="14.5" cy="6.7" rx="1.2" ry="1.2" fill="#e05a1c"/><ellipse cx="23.0" cy="14.2" rx="2.1" ry="2.0" fill="#4c9a24"/><ellipse cx="24.4" cy="2.0" rx="1.6" ry="1.2" fill="#2468b8"/><ellipse cx="6.1" cy="13.2" rx="1.0" ry="1.0" fill="#b02010"/><ellipse cx="22.3" cy="21.3" rx="2.0" ry="1.7" fill="#2468b8"/><ellipse cx="23.8" cy="15.7" rx="1.5" ry="1.6" fill="#4c9a24"/><ellipse cx="19.0" cy="17.9" rx="1.1" ry="1.1" fill="#801818"/><ellipse cx="23.1" cy="18.4" rx="1.5" ry="1.5" fill="#801818"/><ellipse cx="13.9" cy="25.4" rx="1.4" ry="1.3" fill="#e06c28"/><ellipse cx="2.4" cy="20.7" rx="1.2" ry="0.9" fill="#98141c"/><ellipse cx="36.7" cy="13.4" rx="1.2" ry="1.0" fill="#4c9a24"/><ellipse cx="35.3" cy="22.1" rx="2.0" ry="1.7" fill="#98141c"/><ellipse cx="39.5" cy="18.4" rx="1.5" ry="1.2" fill="#e05a1c"/><ellipse cx="7.0" cy="6.3" rx="1.3" ry="1.1" fill="#30408c"/><ellipse cx="7.3" cy="7.6" rx="1.2" ry="1.1" fill="#30408c"/><ellipse cx="22.7" cy="25.7" rx="1.8" ry="1.7" fill="#30408c"/><ellipse cx="26.2" cy="20.0" rx="1.5" ry="1.6" fill="#d84818"/><ellipse cx="27.2" cy="15.1" rx="1.5" ry="1.3" fill="#e06c28"/><ellipse cx="25.4" cy="1.7" rx="1.1" ry="0.8" fill="#e89820"/><ellipse cx="4.4" cy="16.2" rx="1.1" ry="1.0" fill="#b0b828"/><ellipse cx="4.1" cy="9.8" rx="1.0" ry="1.1" fill="#30408c"/><ellipse cx="15.0" cy="17.1" rx="2.1" ry="2.0" fill="#e06c28"/><ellipse cx="4.9" cy="22.9" rx="2.2" ry="1.9" fill="#e06c28"/><ellipse cx="12.5" cy="3.9" rx="1.9" ry="1.9" fill="#e06c28"/><ellipse cx="33.2" cy="4.4" rx="1.0" ry="1.1" fill="#b0b828"/><ellipse cx="14.5" cy="18.6" rx="2.1" ry="2.1" fill="#4c9a24"/><ellipse cx="39.1" cy="23.3" rx="1.8" ry="1.5" fill="#2468b8"/><ellipse cx="36.3" cy="9.6" rx="1.3" ry="1.2" fill="#b0b828"/><ellipse cx="13.2" cy="6.0" rx="2.0" ry="2.2" fill="#d84818"/><ellipse cx="7.8" cy="6.5" rx="1.5" ry="1.5" fill="#d8c024"/><ellipse cx="20.7" cy="9.6" rx="1.0" ry="0.7" fill="#4c9a24"/><ellipse cx="18.9" cy="5.2" rx="1.7" ry="1.4" fill="#b02010"/><ellipse cx="37.5" cy="26.7" rx="2.1" ry="1.8" fill="#d8c024"/><ellipse cx="4.1" cy="12.7" rx="1.4" ry="1.3" fill="#30408c"/><ellipse cx="33.6" cy="12.9" rx="1.8" ry="1.8" fill="#e05a1c"/><ellipse cx="33.4" cy="3.2" rx="1.5" ry="1.4" fill="#d8c024"/><ellipse cx="19.1" cy="4.8" rx="1.9" ry="1.6" fill="#b02010"/><ellipse cx="37.8" cy="19.5" rx="1.6" ry="1.6" fill="#e05a1c"/><ellipse cx="29.0" cy="4.6" rx="1.2" ry="0.9" fill="#e06c28"/><ellipse cx="32.3" cy="3.9" rx="2.0" ry="2.2" fill="#801818"/><ellipse cx="37.5" cy="4.2" rx="1.7" ry="1.2" fill="#b02010"/><ellipse cx="38.8" cy="17.5" rx="1.6" ry="1.8" fill="#98141c"/><ellipse cx="39.5" cy="5.3" rx="2.0" ry="1.5" fill="#d8c024"/><ellipse cx="11.7" cy="6.5" rx="1.7" ry="1.4" fill="#98141c"/><ellipse cx="33.4" cy="1.6" rx="1.9" ry="2.0" fill="#801818"/><ellipse cx="23.3" cy="24.4" rx="1.5" ry="1.6" fill="#b0b828"/><ellipse cx="5.2" cy="4.1" rx="1.6" ry="1.7" fill="#b02010"/><ellipse cx="7.3" cy="0.1" rx="2.0" ry="1.5" fill="#e06c28"/><ellipse cx="24.8" cy="3.2" rx="1.1" ry="1.0" fill="#b0b828"/><ellipse cx="22.2" cy="21.2" rx="1.1" ry="1.0" fill="#d8c024"/><ellipse cx="7.7" cy="1.1" rx="1.1" ry="1.0" fill="#c82414"/><ellipse cx="30.4" cy="24.6" rx="1.5" ry="1.4" fill="#b0b828"/><ellipse cx="24.2" cy="5.4" rx="1.3" ry="1.2" fill="#b02010"/><ellipse cx="19.1" cy="25.4" rx="1.8" ry="1.9" fill="#4c9a24"/><ellipse cx="36.9" cy="24.1" rx="1.2" ry="1.1" fill="#98141c"/><ellipse cx="4.9" cy="11.9" rx="1.1" ry="0.9" fill="#e05a1c"/><ellipse cx="8.5" cy="8.2" rx="1.1" ry="1.2" fill="#d03c30"/><ellipse cx="25.7" cy="9.9" rx="1.3" ry="1.0" fill="#e06c28"/><ellipse cx="8.8" cy="25.7" rx="1.5" ry="1.3" fill="#801818"/><ellipse cx="33.3" cy="4.4" rx="1.5" ry="1.4" fill="#2468b8"/><ellipse cx="16.9" cy="9.6" rx="1.1" ry="0.9" fill="#2468b8"/><ellipse cx="22.2" cy="11.9" rx="1.0" ry="0.9" fill="#30408c"/><ellipse cx="11.8" cy="25.9" rx="1.1" ry="1.2" fill="#d8c024"/><ellipse cx="38.9" cy="2.8" rx="1.3" ry="0.9" fill="#b02010"/><ellipse cx="7.3" cy="20.4" rx="2.0" ry="2.1" fill="#801818"/><ellipse cx="32.8" cy="7.0" rx="1.2" ry="1.3" fill="#30408c"/><ellipse cx="19.8" cy="8.8" rx="1.3" ry="1.4" fill="#e89820"/><ellipse cx="17.0" cy="2.0" rx="2.1" ry="2.0" fill="#b02010"/><ellipse cx="10.4" cy="16.4" rx="1.3" ry="1.0" fill="#e05a1c"/><ellipse cx="18.2" cy="9.2" rx="1.7" ry="1.8" fill="#4c9a24"/><ellipse cx="24.9" cy="1.2" rx="1.9" ry="2.0" fill="#e89820"/><ellipse cx="10.5" cy="4.9" rx="2.1" ry="2.0" fill="#b0b828"/><ellipse cx="30.4" cy="7.8" rx="1.6" ry="1.2" fill="#2468b8"/><ellipse cx="32.1" cy="26.9" rx="1.0" ry="0.7" fill="#b0b828"/><ellipse cx="22.0" cy="5.1" rx="1.6" ry="1.7" fill="#e05a1c"/><ellipse cx="26.3" cy="17.6" rx="1.8" ry="1.6" fill="#98141c"/><ellipse cx="38.8" cy="8.3" rx="1.3" ry="1.0" fill="#d8c024"/><ellipse cx="33.3" cy="19.1" rx="1.8" ry="1.5" fill="#2468b8"/><ellipse cx="39.3" cy="22.6" rx="1.0" ry="1.0" fill="#4c9a24"/><ellipse cx="17.2" cy="1.5" rx="1.8" ry="1.5" fill="#b0b828"/><ellipse cx="26.8" cy="7.6" rx="1.3" ry="1.1" fill="#e06c28"/><ellipse cx="7.4" cy="7.3" rx="1.0" ry="0.8" fill="#2468b8"/><ellipse cx="38.9" cy="14.8" rx="1.3" ry="1.4" fill="#4c9a24"/><ellipse cx="8.7" cy="4.9" rx="1.4" ry="1.0" fill="#4c9a24"/><ellipse cx="20.1" cy="5.4" rx="1.6" ry="1.1" fill="#4c9a24"/><ellipse cx="32.7" cy="3.9" rx="1.7" ry="1.5" fill="#4c9a24"/><ellipse cx="12.2" cy="6.3" rx="1.7" ry="1.6" fill="#b02010"/><ellipse cx="6.2" cy="24.1" rx="1.9" ry="1.8" fill="#b02010"/><ellipse cx="13.0" cy="26.6" rx="1.2" ry="1.2" fill="#801818"/><ellipse cx="5.8" cy="22.3" rx="1.9" ry="1.7" fill="#98141c"/><ellipse cx="29.4" cy="21.9" rx="1.2" ry="1.1" fill="#b0b828"/><ellipse cx="22.7" cy="21.9" rx="1.0" ry="1.0" fill="#b02010"/><ellipse cx="35.7" cy="18.4" rx="1.8" ry="1.5" fill="#c82414"/><ellipse cx="1.7" cy="17.2" rx="2.2" ry="1.8" fill="#e06c28"/><ellipse cx="22.3" cy="16.9" rx="1.8" ry="1.7" fill="#e06c28"/><ellipse cx="10.6" cy="12.3" rx="1.1" ry="1.2" fill="#b0b828"/><ellipse cx="3.7" cy="14.2" rx="1.9" ry="1.7" fill="#b02010"/><ellipse cx="3.0" cy="7.2" rx="1.9" ry="1.5" fill="#d03c30"/><ellipse cx="26.0" cy="12.4" rx="2.0" ry="1.5" fill="#801818"/><ellipse cx="11.5" cy="1.3" rx="1.8" ry="1.4" fill="#30408c"/><ellipse cx="5.9" cy="6.9" rx="1.9" ry="1.6" fill="#30408c"/><ellipse cx="5.3" cy="13.0" rx="1.6" ry="1.7" fill="#e05a1c"/><ellipse cx="27.7" cy="18.2" rx="1.3" ry="1.2" fill="#e06c28"/><ellipse cx="18.6" cy="20.7" rx="2.2" ry="2.0" fill="#4c9a24"/><ellipse cx="39.1" cy="25.3" rx="1.0" ry="0.9" fill="#d84818"/><ellipse cx="20.3" cy="26.9" rx="2.2" ry="1.9" fill="#d8c024"/><ellipse cx="3.0" cy="2.4" rx="1.9" ry="1.5" fill="#2468b8"/><ellipse cx="5.3" cy="22.1" rx="1.6" ry="1.7" fill="#d03c30"/><ellipse cx="14.6" cy="13.4" rx="2.1" ry="1.8" fill="#e89820"/><ellipse cx="0.1" cy="13.3" rx="1.5" ry="1.3" fill="#e89820"/><ellipse cx="16.6" cy="10.2" rx="1.1" ry="1.0" fill="#2468b8"/><ellipse cx="30.0" cy="22.7" rx="1.1" ry="1.2" fill="#d03c30"/><ellipse cx="0.5" cy="20.0" rx="1.3" ry="0.9" fill="#98141c"/><ellipse cx="40.0" cy="15.9" rx="1.4" ry="1.2" fill="#4c9a24"/><ellipse cx="34.2" cy="7.6" rx="1.1" ry="1.0" fill="#801818"/><ellipse cx="37.4" cy="6.7" rx="1.3" ry="1.2" fill="#d8c024"/><ellipse cx="30.9" cy="21.2" rx="1.5" ry="1.1" fill="#b02010"/><ellipse cx="25.2" cy="24.7" rx="2.1" ry="2.0" fill="#d03c30"/><ellipse cx="3.2" cy="25.2" rx="1.5" ry="1.4" fill="#e89820"/><ellipse cx="25.8" cy="7.7" rx="1.1" ry="1.1" fill="#e89820"/><ellipse cx="6.8" cy="11.2" rx="1.3" ry="1.1" fill="#d03c30"/><ellipse cx="39.1" cy="7.0" rx="1.8" ry="1.5" fill="#b0b828"/><ellipse cx="26.8" cy="3.2" rx="1.8" ry="1.3" fill="#b0b828"/><ellipse cx="36.2" cy="13.4" rx="1.3" ry="1.3" fill="#b02010"/><ellipse cx="18.0" cy="3.8" rx="1.2" ry="0.9" fill="#2468b8"/><ellipse cx="22.2" cy="8.6" rx="1.4" ry="1.5" fill="#d8c024"/><ellipse cx="35.5" cy="20.2" rx="1.5" ry="1.3" fill="#b0b828"/><ellipse cx="8.4" cy="7.3" rx="1.9" ry="1.7" fill="#30408c"/><ellipse cx="38.7" cy="3.4" rx="1.6" ry="1.5" fill="#d84818"/><ellipse cx="33.9" cy="2.5" rx="2.1" ry="1.8" fill="#801818"/><ellipse cx="17.8" cy="25.8" rx="2.0" ry="2.1" fill="#c82414"/><ellipse cx="5.1" cy="11.5" rx="1.9" ry="2.0" fill="#30408c"/><ellipse cx="19.6" cy="2.0" rx="2.1" ry="2.3" fill="#b0b828"/><ellipse cx="34.2" cy="26.3" rx="1.3" ry="1.0" fill="#e89820"/><ellipse cx="6.1" cy="26.2" rx="1.1" ry="1.2" fill="#d03c30"/><ellipse cx="25.9" cy="20.6" rx="1.5" ry="1.4" fill="#c82414"/><ellipse cx="0.1" cy="3.4" rx="1.7" ry="1.2" fill="#d03c30"/><ellipse cx="12.2" cy="3.5" rx="1.3" ry="1.2" fill="#d03c30"/><ellipse cx="30.6" cy="2.7" rx="1.4" ry="1.5" fill="#d8c024"/><ellipse cx="15.5" cy="6.0" rx="1.7" ry="1.2" fill="#4c9a24"/><ellipse cx="39.9" cy="7.5" rx="1.4" ry="1.4" fill="#d8c024"/><ellipse cx="19" cy="10" rx="3" ry="2.5" fill="#8cc020"/><ellipse cx="21" cy="7" rx="2" ry="2" fill="#e8d830"/><ellipse cx="27" cy="9" rx="2.5" ry="2.5" fill="#3478c8"/><ellipse cx="4" cy="12" rx="2.5" ry="3.5" fill="#3c9428"/><ellipse cx="7" cy="17" rx="2.5" ry="2.5" fill="#2c8030"/><ellipse cx="34" cy="4" rx="2.5" ry="2" fill="#dcc024"/><ellipse cx="9" cy="23" rx="2.5" ry="2" fill="#2488a0"/><ellipse cx="3" cy="24" rx="2.2" ry="2.2" fill="#481858"/><ellipse cx="2" cy="3" rx="3" ry="2" fill="#702010"/><ellipse cx="14" cy="3" rx="4" ry="2.5" fill="#e08030"/><ellipse cx="30" cy="20" rx="3" ry="2.5" fill="#c8a820"/><ellipse cx="37" cy="14" rx="2.5" ry="3" fill="#d03030"/></g></defs><use href="#tg4" x="-0.37" y="-0.37" opacity="1"/><use href="#tg4" x="0.37" y="-0.37" opacity="0.5"/><use href="#tg4" x="-0.37" y="0.37" opacity="0.3333"/><use href="#tg4" x="0.37" y="0.37" opacity="0.25"/></svg><div class="nm"><div>amit-lahav-LU_fCezP9-o-unsplash.jpg</div><div>/Asset-Data/Demo/Images/1-apollon-Demo-Images/amit-…</div></div><span class="c ot">Bild</span><span class="c sz">5.35 MB</span><span class="c ho">1355 mm</span><span class="c br">2032 …</span><span class="c d1">4. Juli 2023</span><span class="c d2">4. Juli 2023</span></div>
<div class="row" style="top:240px"><span class="cb"></span><svg class="th" viewBox="0 0 40 27" style="left:82px;top:11px;width:40px;height:27px;overflow:hidden"><defs><g id="tg5"><rect x="-2" y="-2" width="44" height="31" fill="#e20f12"/><ellipse cx="20" cy="14" rx="14" ry="8" fill="#ea1a18"/><rect x="-2" y="22" width="44" height="6" fill="#cc0c10"/><path d="M10 5.5q5.500 3.400 11 0" stroke="#fbe8e8" stroke-width="2" fill="none" stroke-linecap="round"/><path d="M22 5.5q5.500 3.400 11 0" stroke="#fbe8e8" stroke-width="2" fill="none" stroke-linecap="round"/><circle cx="6.5" cy="7.5" r="1.300" fill="#fbe0e0"/><circle cx="19.7" cy="7.5" r="1.300" fill="#fbe0e0"/><circle cx="34" cy="7.5" r="1.300" fill="#fbe0e0"/><path d="M2 18q5.500 3.400 11 0" stroke="#fbe8e8" stroke-width="2" fill="none" stroke-linecap="round"/><path d="M16 18q5.500 3.400 11 0" stroke="#fbe8e8" stroke-width="2" fill="none" stroke-linecap="round"/><path d="M30 18q5.500 3.400 11 0" stroke="#fbe8e8" stroke-width="2" fill="none" stroke-linecap="round"/><circle cx="1.5" cy="22" r="1.300" fill="#fbe0e0"/><circle cx="13.5" cy="22" r="1.300" fill="#fbe0e0"/><circle cx="26.5" cy="22" r="1.300" fill="#fbe0e0"/><circle cx="38.5" cy="22" r="1.300" fill="#fbe0e0"/></g></defs><use href="#tg5" x="-0.28" y="-0.28" opacity="1"/><use href="#tg5" x="0.28" y="-0.28" opacity="0.5"/><use href="#tg5" x="-0.28" y="0.28" opacity="0.3333"/><use href="#tg5" x="0.28" y="0.28" opacity="0.25"/></svg><div class="nm"><div>amr-serag-7GLsZZ0qBIk-unsplash.jpg</div><div>/Asset-Data/Demo/Images/1-apollon-Demo-Images/amr-…</div></div><span class="c ot">Bild</span><span class="c sz">2.13 MB</span><span class="c ho">1411 mm</span><span class="c br">2117 …</span><span class="c d1">4. Juli 2023</span><span class="c d2">4. Juli 2023</span></div>
<div class="row" style="top:288px"><span class="cb"></span><svg class="th" viewBox="0 0 27 40" style="left:82px;top:4px;width:27px;height:40px;overflow:hidden"><defs><g id="tg6"><rect x="-2" y="-2" width="31" height="44" fill="#c679a8"/><ellipse cx="24" cy="8" rx="6" ry="9" fill="#b56a99"/><ellipse cx="3" cy="8" rx="5" ry="8" fill="#cf86b2"/><ellipse cx="14" cy="9.5" rx="7.8" ry="9.8" fill="#dcc4a0"/><ellipse cx="10" cy="7" rx="3.5" ry="6" fill="#efe2cc"/><rect x="19.5" y="4" width="4" height="22" fill="#a08462"/><rect x="6.5" y="8" width="2.8" height="13" fill="#e6d6b8"/><ellipse cx="14.5" cy="12.5" rx="4.5" ry="6" fill="#eccbb8"/><ellipse cx="12.6" cy="11" rx="1" ry="0.6" fill="#4a3030"/><ellipse cx="16.6" cy="11" rx="1" ry="0.6" fill="#4a3030"/><ellipse cx="14.6" cy="16" rx="1.7" ry="0.9" fill="#a03c4c"/><ellipse cx="14.6" cy="13.8" rx="0.6" ry="0.5" fill="#c89888"/><path d="M-2 42V28c2-5 8-9 16-9s13 4 15 9v14z" fill="#15100f"/><path d="M3 25l-3 -3" stroke="#15100f" stroke-width="1.200"/><path d="M6 22l-2 -3" stroke="#15100f" stroke-width="1.200"/><path d="M10 20l-1 -3" stroke="#15100f" stroke-width="1.200"/><path d="M20 20l2 -2" stroke="#15100f" stroke-width="1.200"/><path d="M24 23l3 -2" stroke="#15100f" stroke-width="1.200"/><path d="M26 27l3 -1" stroke="#15100f" stroke-width="1.200"/><ellipse cx="4.5" cy="24.5" rx="3.6" ry="2.2" fill="#eac4bc"/><path d="M2 23l-2 -2.5" stroke="#eac4bc" stroke-width=".9"/><path d="M4 22.5l-0.5 -3" stroke="#eac4bc" stroke-width=".9"/><path d="M6 23l1.5 -2.5" stroke="#eac4bc" stroke-width=".9"/><ellipse cx="23.5" cy="29.5" rx="3.5" ry="2.6" fill="#dcb4ac"/><path d="M21 28l-1.5 -2.5" stroke="#dcb4ac" stroke-width=".9"/><path d="M23.5 27.5l0 -3" stroke="#dcb4ac" stroke-width=".9"/><path d="M26 28.5l1.5 -2.5" stroke="#dcb4ac" stroke-width=".9"/><rect x="-1" y="30" width="4.5" height="12" fill="#4a2c1c"/><rect x="24" y="35" width="4" height="7" fill="#5a3626"/><ellipse cx="25" cy="22" rx="1.5" ry="1.5" fill="#4a1838"/></g></defs><use href="#tg6" x="-0.31" y="-0.31" opacity="1"/><use href="#tg6" x="0.31" y="-0.31" opacity="0.5"/><use href="#tg6" x="-0.31" y="0.31" opacity="0.3333"/><use href="#tg6" x="0.31" y="0.31" opacity="0.25"/></svg><div class="nm"><div>anastasiya-gepp-2036643.jpg</div><div>/Asset-Data/Demo/Images/1-apollon-Demo-Images/anas…</div></div><span class="c ot">Bild</span><span class="c sz">3.34 MB</span><span class="c ho">2062 mm</span><span class="c br">1374 …</span><span class="c d1">4. Juli 2023</span><span class="c d2">4. Juli 2023</span></div>
<div class="row" style="top:336px"><span class="cb"></span><svg class="th" viewBox="0 0 27 40" style="left:82px;top:4px;width:27px;height:40px;overflow:hidden"><defs><g id="tg7"><rect x="-2" y="-2" width="31" height="44" fill="#dd6575"/><ellipse cx="6" cy="14" rx="8" ry="12" fill="#e57383"/><rect x="20" y="-2" width="9" height="44" fill="#d35a6b"/><rect x="-2" y="34" width="31" height="8" fill="#d96474"/><ellipse cx="12.8" cy="6.2" rx="3.6" ry="4.4" fill="#3a1a1a"/><ellipse cx="13.2" cy="7.6" rx="2.1" ry="2.7" fill="#dcae98"/><ellipse cx="12.3" cy="7.3" rx="0.5" ry="0.4" fill="#3a2020"/><ellipse cx="13" cy="9" rx="0.8" ry="0.4" fill="#b04858"/><path d="M15.500 4c3 3 6.500 9 6.500 17l-2.500-1c0-6-2.500-11-5-14z" fill="#2c1414"/><ellipse cx="14.2" cy="12.5" rx="2.6" ry="2.8" fill="#e6bca8"/><ellipse cx="11" cy="15" rx="1.3" ry="3" fill="#e6bca8"/><path d="M7.500 19c2-3.500 11-3.500 14 0l.5 4.500H8z" fill="#f5d3db"/><path d="M11 22.500h8c1.200 6 1 12-1 19h-6c-1-6-2-13-1-19z" fill="#efc6d0"/><rect x="13.2" y="22" width="1.6" height="19" fill="#d49cae"/><rect x="8" y="22.5" width="14" height="1" fill="#e8b4c2"/><ellipse cx="17" cy="28" rx="1.5" ry="6" fill="#f7dbe2"/></g></defs><use href="#tg7" x="-0.31" y="-0.31" opacity="1"/><use href="#tg7" x="0.31" y="-0.31" opacity="0.5"/><use href="#tg7" x="-0.31" y="0.31" opacity="0.3333"/><use href="#tg7" x="0.31" y="0.31" opacity="0.25"/></svg><div class="nm"><div>anastasiya-gepp-2065194.jpg</div><div>/Asset-Data/Demo/Images/1-apollon-Demo-Images/anas…</div></div><span class="c ot">Bild</span><span class="c sz">765.06 …</span><span class="c ho">1513 mm</span><span class="c br">1009 …</span><span class="c d1">4. Juli 2023</span><span class="c d2">4. Juli 2023</span></div>
<div class="row" style="top:384px"><span class="cb"></span><svg class="th" viewBox="0 0 27 40" style="left:82px;top:4px;width:27px;height:40px;overflow:hidden"><defs><g id="tg8"><rect x="-2" y="-2" width="31" height="44" fill="#e8b11f"/><ellipse cx="8" cy="18" rx="8" ry="14" fill="#efbd2c"/><rect x="22" y="-2" width="7" height="44" fill="#e2a91a"/><ellipse cx="17.6" cy="5.5" rx="3.2" ry="3.8" fill="#5e3826"/><ellipse cx="16.2" cy="6.6" rx="1.9" ry="2.5" fill="#e2b29a"/><ellipse cx="15.5" cy="6.2" rx="0.4" ry="0.4" fill="#3a2020"/><path d="M19.500 5c2 4 3 10 2 17l-1.500-1c.3-5-1-9-2.500-13z" fill="#54301e"/><ellipse cx="16.5" cy="10" rx="1.2" ry="1.5" fill="#e2b29a"/><path d="M13 13.500c2-2.500 6-2.500 7 .5l-.8 9-7.500 1c-.5-4 0-8 1.300-10.500z" fill="#f3eee8"/><path d="M12 15.500c-2 3-4 7-5.500 12.500" stroke="#e2b29a" stroke-width="1.500" fill="none"/><path d="M11.800 23.500l8-1c2 5 1 10-1 19h-7c1-5 1.500-10-.5-14z" fill="#a8ead2"/><rect x="15.2" y="29" width="1.3" height="13" fill="#e8b11f"/><ellipse cx="6.3" cy="33.5" rx="1.3" ry="1.3" fill="#c87850"/><ellipse cx="13.5" cy="27" rx="1.5" ry="3" fill="#c4f2e2"/></g></defs><use href="#tg8" x="-0.31" y="-0.31" opacity="1"/><use href="#tg8" x="0.31" y="-0.31" opacity="0.5"/><use href="#tg8" x="-0.31" y="0.31" opacity="0.3333"/><use href="#tg8" x="0.31" y="0.31" opacity="0.25"/></svg><div class="nm"><div>anastasiya-gepp-206520.jpg</div><div>/Asset-Data/Demo/Images/1-apollon-Demo-Images/anas…</div></div><span class="c ot">Bild</span><span class="c sz">897.15 …</span><span class="c ho">1699 mm</span><span class="c br">1132 …</span><span class="c d1">4. Juli 2023</span><span class="c d2">4. Juli 2023</span></div>
<div class="row" style="top:432px"><span class="cb"></span><svg class="th" viewBox="0 0 27 40" style="left:82px;top:4px;width:27px;height:40px;overflow:hidden"><defs><g id="tg9"><rect x="-2" y="-2" width="31" height="44" fill="#e7af20"/><rect x="-2" y="-2" width="5" height="44" fill="#dca418"/><path d="M3 13C2.500 4 9 0 15.500 1s9.500 6.500 7 17l-4 2.500-12-2z" fill="#3c2216"/><ellipse cx="11.5" cy="16" rx="7" ry="9.5" fill="#eec8b0"/><ellipse cx="7.5" cy="12.6" rx="2" ry="0.9" fill="#5a3430"/><ellipse cx="14.8" cy="14" rx="1.7" ry="0.9" fill="#5a3430"/><ellipse cx="7.3" cy="11" rx="2.2" ry="0.5" fill="#4a2c20"/><ellipse cx="15" cy="12.3" rx="2" ry="0.5" fill="#4a2c20"/><ellipse cx="10" cy="21.5" rx="2.7" ry="1.4" fill="#d85c58"/><ellipse cx="10.3" cy="18" rx="0.9" ry="0.7" fill="#d8a890"/><ellipse cx="15" cy="19" rx="2.5" ry="2" fill="#f2d0bc"/><path d="M1 42c1-9 5-13 10.500-14.500l8.500-2.500c5 1 8 7 9 17z" fill="#f1ede5"/><ellipse cx="18" cy="33" rx="5" ry="6" fill="#e2dacc"/><ellipse cx="10" cy="36" rx="4" ry="4" fill="#f8f6f0"/><rect x="19.5" y="9" width="3.5" height="13" fill="#3c2216"/><ellipse cx="16" cy="27" rx="3" ry="2" fill="#e0b8a0"/></g></defs><use href="#tg9" x="-0.31" y="-0.31" opacity="1"/><use href="#tg9" x="0.31" y="-0.31" opacity="0.5"/><use href="#tg9" x="-0.31" y="0.31" opacity="0.3333"/><use href="#tg9" x="0.31" y="0.31" opacity="0.25"/></svg><div class="nm"><div>anastasiya-gepp-2065201.jpg</div><div>/Asset-Data/Demo/Images/1-apollon-Demo-Images/anas…</div></div><span class="c ot">Bild</span><span class="c sz">1.70 MB</span><span class="c ho">1806 mm</span><span class="c br">1204 …</span><span class="c d1">4. Juli 2023</span><span class="c d2">4. Juli 2023</span></div>
<div class="row" style="top:480px"><span class="cb"></span><svg class="th" viewBox="0 0 30 40" style="left:82px;top:4px;width:30px;height:40px;overflow:hidden"><defs><g id="tg10"><rect x="-2" y="-2" width="34" height="44" fill="#8a8e8f"/><ellipse cx="8" cy="24" rx="9" ry="16" fill="#959a9b"/><rect x="24" y="-2" width="8" height="44" fill="#7d8284"/><rect x="-2" y="-2" width="34" height="5" fill="#7f8486"/><ellipse cx="13" cy="7.5" rx="5.2" ry="5.8" fill="#281e1e"/><ellipse cx="15.3" cy="8.2" rx="2.5" ry="3.2" fill="#e2c2b2"/><ellipse cx="14.6" cy="7.6" rx="0.5" ry="0.4" fill="#2a1a1a"/><ellipse cx="16.4" cy="7.8" rx="0.5" ry="0.4" fill="#2a1a1a"/><ellipse cx="15.6" cy="10" rx="0.9" ry="0.5" fill="#a84850"/><ellipse cx="10.5" cy="14.5" rx="2.8" ry="4.5" fill="#281e1e"/><ellipse cx="19.5" cy="12" rx="2.3" ry="5" fill="#281e1e"/><ellipse cx="12" cy="19" rx="2" ry="2.5" fill="#2e2222"/><path d="M17.500 5.500c2-3.500 5.500-3.500 6.500-1.500l-2 8.500-4.500-2z" fill="#dbc4b6"/><path d="M11 22c1-5 4-7.500 8-6.500l3 6c1 6-1 13-3 20h-9c1-7 1-13 1-19.500z" fill="#decdbd"/><rect x="19.5" y="26" width="3.5" height="16" fill="#67605a"/><path d="M20 23.500l4.500 6.500-3 4.500" stroke="#dbc4b6" stroke-width="1.500" fill="none"/><ellipse cx="14" cy="28" rx="2" ry="8" fill="#eaddd0"/></g></defs><use href="#tg10" x="-0.31" y="-0.31" opacity="1"/><use href="#tg10" x="0.31" y="-0.31" opacity="0.5"/><use href="#tg10" x="-0.31" y="0.31" opacity="0.3333"/><use href="#tg10" x="0.31" y="0.31" opacity="0.25"/></svg><div class="nm"><div>anastasiya-gepp-4235393.jpg</div><div>/Asset-Data/Demo/Images/1-apollon-Demo-Images/anas…</div></div><span class="c ot">Bild</span><span class="c sz">1.83 MB</span><span class="c ho">1957 mm</span><span class="c br">1468 …</span><span class="c d1">4. Juli 2023</span><span class="c d2">4. Juli 2023</span></div>
<div class="row" style="top:528px"><span class="cb"></span><svg class="th" viewBox="0 0 27 40" style="left:82px;top:4px;width:27px;height:40px;overflow:hidden"><defs><g id="tg11"><rect x="-2" y="-2" width="31" height="44" fill="#e5b592"/><rect x="18" y="-2" width="11" height="44" fill="#deac88"/><rect x="3" y="-2" width="0.5" height="44" fill="#d8a27e"/><rect x="9" y="-2" width="0.5" height="44" fill="#d8a27e"/><rect x="15" y="-2" width="0.5" height="44" fill="#d8a27e"/><rect x="21" y="-2" width="0.5" height="44" fill="#d8a27e"/><ellipse cx="10" cy="9" rx="6.3" ry="7.5" fill="#38201a"/><ellipse cx="12" cy="9.5" rx="2.8" ry="3.6" fill="#e9c6ae"/><ellipse cx="11" cy="9" rx="0.5" ry="0.4" fill="#2a1a1a"/><ellipse cx="13.2" cy="9.2" rx="0.5" ry="0.4" fill="#2a1a1a"/><ellipse cx="12.2" cy="11.4" rx="1" ry="0.5" fill="#b04850"/><ellipse cx="5.5" cy="15" rx="2.6" ry="4.5" fill="#38201a"/><ellipse cx="16" cy="14" rx="2.5" ry="5" fill="#38201a"/><path d="M7 20c2-3 9-4 12-1l1 10c0 4-2 7-4 9H8c-1-6-2-12-1-18z" fill="#ecd0bc"/><path d="M9 21c3-2 7-2 9 0l0 7c-3 2-6 2-9 0z" fill="#f5f2f0"/><path d="M8 31c3 2 7 2 10 0l-2 7H9z" fill="#f2eae6"/><ellipse cx="4.5" cy="33.5" rx="3.6" ry="3.2" fill="#564032"/><ellipse cx="20" cy="36.5" rx="5.5" ry="3" fill="#e2aa8a"/><ellipse cx="13" cy="38.5" rx="6" ry="2" fill="#e8b898"/><ellipse cx="6" cy="22" rx="1.5" ry="5" fill="#ecd0bc"/></g></defs><use href="#tg11" x="-0.31" y="-0.31" opacity="1"/><use href="#tg11" x="0.31" y="-0.31" opacity="0.5"/><use href="#tg11" x="-0.31" y="0.31" opacity="0.3333"/><use href="#tg11" x="0.31" y="0.31" opacity="0.25"/></svg><div class="nm"><div>anastasiya-gepp-4382488.jpg</div><div>/Asset-Data/Demo/Images/1-apollon-Demo-Images/anas…</div></div><span class="c ot">Bild</span><span class="c sz">1.29 MB</span><span class="c ho">1963 mm</span><span class="c br">1308 …</span><span class="c d1">4. Juli 2023</span><span class="c d2">4. Juli 2023</span></div>
<div class="row" style="top:576px"><span class="cb"></span><svg class="th" viewBox="0 0 40 27" style="left:82px;top:11px;width:40px;height:27px;overflow:hidden"><defs><g id="tg12"><rect x="-2" y="-2" width="44" height="31" fill="#2a221b"/><rect x="-2" y="-2" width="44" height="6.5" fill="#6e4e34"/><rect x="21" y="0" width="14" height="6" fill="#a8988a"/><rect x="3.5" y="0" width="6" height="3" fill="#e4e4e4"/><rect x="10" y="0" width="8" height="5" fill="#8a5a38"/><ellipse cx="25.7" cy="19.6" rx="1.8" ry="1.5" fill="#2a2a24"/><ellipse cx="37.0" cy="4.6" rx="1.4" ry="1.5" fill="#2a2a24"/><ellipse cx="4.0" cy="7.3" rx="1.2" ry="1.5" fill="#746250"/><ellipse cx="22.7" cy="16.1" rx="0.8" ry="0.9" fill="#5a4636"/><ellipse cx="8.9" cy="22.2" rx="1.3" ry="1.4" fill="#6a7c90"/><ellipse cx="7.3" cy="17.0" rx="1.0" ry="0.7" fill="#8496a8"/><ellipse cx="10.0" cy="8.5" rx="2.0" ry="1.5" fill="#5a4636"/><ellipse cx="13.9" cy="8.2" rx="1.9" ry="1.3" fill="#94a4b8"/><ellipse cx="37.8" cy="18.5" rx="2.0" ry="1.5" fill="#5a4636"/><ellipse cx="2.8" cy="12.7" rx="1.9" ry="0.9" fill="#3a3026"/><ellipse cx="13.5" cy="16.7" rx="0.8" ry="1.3" fill="#3a3026"/><ellipse cx="4.5" cy="11.5" rx="1.2" ry="1.3" fill="#94a4b8"/><ellipse cx="20.3" cy="18.8" rx="0.9" ry="1.6" fill="#8496a8"/><ellipse cx="38.1" cy="11.5" rx="1.3" ry="1.2" fill="#746250"/><ellipse cx="15.9" cy="16.1" rx="0.8" ry="0.7" fill="#94a4b8"/><ellipse cx="25.7" cy="24.0" rx="0.9" ry="0.9" fill="#a87c58"/><ellipse cx="15.1" cy="11.5" rx="1.4" ry="1.4" fill="#6a7c90"/><ellipse cx="24.4" cy="20.4" rx="1.2" ry="1.0" fill="#746250"/><ellipse cx="37.9" cy="5.9" rx="1.2" ry="1.2" fill="#94a4b8"/><ellipse cx="14.9" cy="23.4" rx="1.5" ry="1.0" fill="#3a3026"/><ellipse cx="13.6" cy="20.8" rx="1.6" ry="1.3" fill="#5a4636"/><ellipse cx="39.9" cy="7.4" rx="0.9" ry="1.6" fill="#4c5866"/><ellipse cx="37.1" cy="4.7" rx="1.7" ry="1.0" fill="#5a4636"/><ellipse cx="19.3" cy="12.9" rx="0.9" ry="1.5" fill="#8496a8"/><ellipse cx="32.5" cy="11.0" rx="1.0" ry="1.6" fill="#d0d4d8"/><ellipse cx="38.1" cy="17.2" rx="1.7" ry="0.8" fill="#746250"/><ellipse cx="16.2" cy="5.2" rx="1.3" ry="0.8" fill="#d0d4d8"/><ellipse cx="34.4" cy="24.5" rx="1.3" ry="1.1" fill="#3a3026"/><ellipse cx="20.2" cy="10.1" rx="1.3" ry="0.8" fill="#746250"/><ellipse cx="33.2" cy="15.2" rx="1.0" ry="1.5" fill="#3a3026"/><ellipse cx="8.8" cy="14.3" rx="1.4" ry="1.2" fill="#4c5866"/><ellipse cx="15.7" cy="20.5" rx="1.7" ry="1.3" fill="#2a2a24"/><ellipse cx="3.3" cy="10.4" rx="1.5" ry="1.3" fill="#a87c58"/><ellipse cx="12.1" cy="24.6" rx="1.7" ry="1.6" fill="#3a3026"/><ellipse cx="26.7" cy="16.2" rx="0.8" ry="1.2" fill="#5a4636"/><ellipse cx="14.4" cy="9.7" rx="1.1" ry="1.2" fill="#2a2a24"/><ellipse cx="32.3" cy="11.3" rx="1.6" ry="1.4" fill="#746250"/><ellipse cx="15.3" cy="21.7" rx="1.8" ry="1.3" fill="#3a3026"/><ellipse cx="38.3" cy="14.9" rx="1.4" ry="0.8" fill="#3a3026"/><ellipse cx="37.6" cy="14.0" rx="1.6" ry="1.3" fill="#746250"/><ellipse cx="8.5" cy="20.4" rx="1.5" ry="1.3" fill="#746250"/><ellipse cx="13.5" cy="15.6" rx="1.8" ry="0.9" fill="#8496a8"/><ellipse cx="9.4" cy="16.3" rx="1.5" ry="0.9" fill="#2a2a24"/><ellipse cx="8.9" cy="19.1" rx="2.0" ry="1.6" fill="#94a4b8"/><ellipse cx="4.1" cy="6.8" rx="1.2" ry="0.9" fill="#b8c0c8"/><ellipse cx="22.8" cy="12.7" rx="1.2" ry="1.3" fill="#6a7c90"/><ellipse cx="24.4" cy="9.0" rx="1.9" ry="0.7" fill="#746250"/><ellipse cx="38.2" cy="22.0" rx="1.8" ry="1.3" fill="#4c5866"/><ellipse cx="16.2" cy="4.8" rx="1.5" ry="0.8" fill="#4c5866"/><ellipse cx="21.5" cy="24.0" rx="1.2" ry="1.0" fill="#94a4b8"/><ellipse cx="17.9" cy="21.1" rx="1.6" ry="1.0" fill="#94a4b8"/><ellipse cx="8.0" cy="12.0" rx="1.4" ry="0.9" fill="#94a4b8"/><ellipse cx="25.1" cy="11.4" rx="1.9" ry="0.7" fill="#6a7c90"/><ellipse cx="14.4" cy="23.2" rx="1.4" ry="1.0" fill="#d0d4d8"/><ellipse cx="16.3" cy="13.1" rx="1.1" ry="1.0" fill="#746250"/><ellipse cx="16.6" cy="22.0" rx="1.0" ry="1.2" fill="#5a4636"/><ellipse cx="20.9" cy="12.7" rx="1.2" ry="1.6" fill="#a87c58"/><ellipse cx="37.3" cy="7.0" rx="0.8" ry="1.3" fill="#a87c58"/><ellipse cx="11.3" cy="4.8" rx="1.0" ry="1.1" fill="#a87c58"/><ellipse cx="22.2" cy="9.7" rx="1.9" ry="1.4" fill="#b8c0c8"/><ellipse cx="8" cy="12" rx="3" ry="2.5" fill="#8a9cae"/><ellipse cx="15" cy="11" rx="3.5" ry="3" fill="#6a7c90"/><ellipse cx="22" cy="13" rx="3.5" ry="3" fill="#8fa0b4"/><ellipse cx="30" cy="8" rx="3.5" ry="5" fill="#8294aa"/><ellipse cx="36" cy="16" rx="4" ry="2.5" fill="#b4bcc4"/><ellipse cx="5" cy="9" rx="1.5" ry="3" fill="#ececec"/><ellipse cx="16" cy="4" rx="3" ry="3" fill="#a87850"/><ellipse cx="33" cy="5" rx="2.5" ry="2.5" fill="#2e2620"/><rect x="-1" y="10" width="4.5" height="18" fill="#181812"/><ellipse cx="12" cy="22" rx="5" ry="3" fill="#30281e"/></g></defs><use href="#tg12" x="-0.31" y="-0.31" opacity="1"/><use href="#tg12" x="0.31" y="-0.31" opacity="0.5"/><use href="#tg12" x="-0.31" y="0.31" opacity="0.3333"/><use href="#tg12" x="0.31" y="0.31" opacity="0.25"/></svg><div class="nm"><div>annie-spratt-QckxruozjRg-unsplash.jpg</div><div>/Asset-Data/Demo/Images/1-apollon-Demo-Images/anni…</div></div><span class="c ot">Bild</span><span class="c sz">8.72 MB</span><span class="c ho">1871 mm</span><span class="c br">2805 …</span><span class="c d1">4. Juli 2023</span><span class="c d2">4. Juli 2023</span></div>
<div class="row" style="top:624px"><span class="cb"></span><svg class="th" viewBox="0 0 40 27" style="left:82px;top:11px;width:40px;height:27px;overflow:hidden"><defs><g id="tg13"><rect x="-2" y="-2" width="44" height="13" fill="#c4d6d8"/><rect x="-2" y="-2" width="44" height="7" fill="#a9c8de"/><rect x="-2" y="4" width="44" height="3" fill="#b7cfdc"/><rect x="-2" y="9.5" width="44" height="20" fill="#e8aa1a"/><ellipse cx="9.5" cy="19.5" rx="1.4" ry="1.4" fill="#dc9012"/><ellipse cx="24.2" cy="25.5" rx="1.6" ry="1.4" fill="#f2b82a"/><ellipse cx="39.8" cy="18.3" rx="2.0" ry="1.3" fill="#c47a0a"/><ellipse cx="9.3" cy="13.0" rx="2.1" ry="1.3" fill="#f4c422"/><ellipse cx="26.9" cy="11.6" rx="1.9" ry="1.4" fill="#94640f"/><ellipse cx="31.2" cy="24.1" rx="1.3" ry="1.4" fill="#f0b020"/><ellipse cx="28.6" cy="25.7" rx="1.5" ry="1.6" fill="#e8a018"/><ellipse cx="38.6" cy="12.7" rx="1.4" ry="0.9" fill="#e8a018"/><ellipse cx="8.7" cy="26.4" rx="1.5" ry="1.5" fill="#94640f"/><ellipse cx="16.8" cy="24.3" rx="1.7" ry="1.4" fill="#f0b020"/><ellipse cx="23.4" cy="25.4" rx="1.8" ry="1.7" fill="#94640f"/><ellipse cx="39.6" cy="21.6" rx="1.2" ry="1.7" fill="#dc9012"/><ellipse cx="28.6" cy="14.0" rx="2.0" ry="1.4" fill="#94640f"/><ellipse cx="5.0" cy="18.5" rx="1.8" ry="1.3" fill="#f8d444"/><ellipse cx="32.0" cy="17.3" rx="1.2" ry="1.2" fill="#f0b020"/><ellipse cx="34.9" cy="11.2" rx="1.7" ry="0.9" fill="#f8d444"/><ellipse cx="22.0" cy="25.7" rx="1.3" ry="1.1" fill="#f4c422"/><ellipse cx="12.4" cy="11.8" rx="1.7" ry="0.9" fill="#f2b82a"/><ellipse cx="38.9" cy="15.3" rx="1.3" ry="1.5" fill="#f8d444"/><ellipse cx="12.6" cy="26.3" rx="2.1" ry="1.2" fill="#e8a018"/><ellipse cx="34.8" cy="16.9" rx="2.0" ry="1.5" fill="#dc9012"/><ellipse cx="24.8" cy="26.0" rx="1.6" ry="1.3" fill="#f2b82a"/><ellipse cx="37.5" cy="17.7" rx="1.3" ry="1.2" fill="#f8d444"/><ellipse cx="0.5" cy="17.4" rx="1.7" ry="0.9" fill="#c47a0a"/><ellipse cx="2.4" cy="20.9" rx="1.6" ry="1.5" fill="#f8d444"/><ellipse cx="24.4" cy="15.1" rx="1.6" ry="1.4" fill="#f4c422"/><ellipse cx="38.5" cy="14.6" rx="1.5" ry="1.4" fill="#f8d444"/><ellipse cx="7.1" cy="13.6" rx="1.9" ry="1.7" fill="#94640f"/><ellipse cx="12.0" cy="16.7" rx="1.9" ry="0.9" fill="#c47a0a"/><ellipse cx="12.4" cy="14.2" rx="2.0" ry="1.1" fill="#c47a0a"/><ellipse cx="27.1" cy="21.2" rx="1.1" ry="1.4" fill="#f8d444"/><ellipse cx="27.0" cy="14.2" rx="2.0" ry="1.8" fill="#dc9012"/><ellipse cx="13.5" cy="21.2" rx="2.1" ry="1.3" fill="#f2b82a"/><ellipse cx="31.5" cy="11.1" rx="2.1" ry="1.2" fill="#c47a0a"/><ellipse cx="34.5" cy="16.1" rx="2.0" ry="1.0" fill="#f8d444"/><ellipse cx="23.6" cy="17.5" rx="1.6" ry="1.7" fill="#e8a018"/><ellipse cx="13.9" cy="17.4" rx="1.5" ry="1.3" fill="#f0b020"/><ellipse cx="6.2" cy="10.6" rx="2.1" ry="1.7" fill="#f0b020"/><ellipse cx="22.4" cy="26.8" rx="1.9" ry="0.9" fill="#e8a018"/><ellipse cx="33.5" cy="21.4" rx="1.6" ry="1.2" fill="#f8d444"/><ellipse cx="35.6" cy="24.7" rx="2.0" ry="1.8" fill="#dc9012"/><ellipse cx="32.4" cy="11.2" rx="2.1" ry="1.5" fill="#f2b82a"/><ellipse cx="35.9" cy="25.3" rx="1.7" ry="0.9" fill="#dc9012"/><ellipse cx="6.9" cy="15.4" rx="1.8" ry="1.4" fill="#f0b020"/><ellipse cx="2.1" cy="25.6" rx="1.1" ry="1.0" fill="#e8a018"/><ellipse cx="32.5" cy="11.5" rx="1.3" ry="1.0" fill="#dc9012"/><ellipse cx="6.9" cy="23.6" rx="2.1" ry="1.6" fill="#f4c422"/><ellipse cx="19.5" cy="19.9" rx="1.5" ry="1.6" fill="#f2b82a"/><ellipse cx="10.7" cy="19.2" rx="1.5" ry="1.3" fill="#f4c422"/><ellipse cx="34.3" cy="23.3" rx="1.1" ry="0.9" fill="#e8a018"/><ellipse cx="39.0" cy="24.6" rx="1.1" ry="1.4" fill="#f8d444"/><ellipse cx="6.3" cy="11.7" rx="1.5" ry="1.3" fill="#94640f"/><ellipse cx="14.4" cy="13.7" rx="1.4" ry="1.0" fill="#f4c422"/><ellipse cx="28.6" cy="16.8" rx="1.1" ry="1.1" fill="#f8d444"/><ellipse cx="18.4" cy="21.2" rx="1.6" ry="1.5" fill="#f4c422"/><ellipse cx="24.9" cy="17.6" rx="1.4" ry="1.3" fill="#f8d444"/><ellipse cx="16.8" cy="22.0" rx="1.6" ry="1.1" fill="#94640f"/><ellipse cx="27.8" cy="11.7" rx="1.5" ry="1.3" fill="#f4c422"/><ellipse cx="37.5" cy="16.7" rx="2.1" ry="1.6" fill="#94640f"/><ellipse cx="4.9" cy="21.9" rx="2.1" ry="1.6" fill="#f0b020"/><ellipse cx="26.7" cy="22.6" rx="1.7" ry="1.0" fill="#f4c422"/><ellipse cx="18.9" cy="14.4" rx="1.5" ry="1.4" fill="#dc9012"/><ellipse cx="26.4" cy="16.7" rx="2.0" ry="1.2" fill="#dc9012"/><ellipse cx="1.0" cy="12.4" rx="1.6" ry="1.5" fill="#94640f"/><ellipse cx="23.2" cy="23.7" rx="1.0" ry="1.6" fill="#f2b82a"/><ellipse cx="4.3" cy="22.9" rx="2.1" ry="1.0" fill="#f8d444"/><ellipse cx="34.8" cy="13.5" rx="1.1" ry="1.8" fill="#f2b82a"/><ellipse cx="18.2" cy="22.1" rx="2.1" ry="1.1" fill="#f0b020"/><ellipse cx="37.6" cy="19.7" rx="2.2" ry="1.2" fill="#f2b82a"/><ellipse cx="38.9" cy="17.3" rx="1.9" ry="1.0" fill="#e8a018"/><ellipse cx="9" cy="11" rx="2.2" ry="2.5" fill="#4a3428"/><rect x="7.5" y="12.5" width="3.5" height="7" fill="#e6cac2"/><ellipse cx="20" cy="11.5" rx="2.3" ry="2.5" fill="#54382a"/><rect x="17.5" y="13" width="5" height="8" fill="#74462a"/><ellipse cx="31" cy="12.5" rx="2" ry="2.2" fill="#caa484"/><rect x="29" y="14" width="4" height="6" fill="#e2c4a6"/><ellipse cx="12" cy="21" rx="3" ry="2.5" fill="#f8d040"/><ellipse cx="4" cy="24" rx="4" ry="2" fill="#b87410"/></g></defs><use href="#tg13" x="-0.37" y="-0.37" opacity="1"/><use href="#tg13" x="0.37" y="-0.37" opacity="0.5"/><use href="#tg13" x="-0.37" y="0.37" opacity="0.3333"/><use href="#tg13" x="0.37" y="0.37" opacity="0.25"/></svg><div class="nm"><div>antonino-visalli-RNiBLy7aHck-unsplash.jpg</div><div>/Asset-Data/Demo/Images/1-apollon-Demo-Images/anto…</div></div><span class="c ot">Bild</span><span class="c sz">1.84 MB</span><span class="c ho">1159 mm</span><span class="c br">1738 …</span><span class="c d1">4. Juli 2023</span><span class="c d2">4. Juli 2023</span></div>
<div class="row" style="top:672px"><span class="cb"></span><svg class="th" viewBox="0 0 30 40" style="left:82px;top:4px;width:30px;height:40px;overflow:hidden"><defs><g id="tg14"><rect x="-2" y="-2" width="34" height="44" fill="#d7a05a"/><rect x="-2" y="-2" width="34" height="9" fill="#dca862"/><rect x="0" y="3" width="30" height="0.5" fill="#c08848"/><rect x="0" y="6" width="30" height="0.5" fill="#c08848"/><rect x="0" y="9" width="30" height="0.5" fill="#c08848"/><rect x="0" y="12" width="30" height="0.5" fill="#c08848"/><rect x="0" y="15" width="30" height="0.5" fill="#c08848"/><rect x="0" y="18" width="30" height="0.5" fill="#c08848"/><rect x="0" y="30" width="30" height="0.5" fill="#c08848"/><rect x="0" y="33" width="30" height="0.5" fill="#c08848"/><rect x="22" y="0" width="1.6" height="4" fill="#4a3420"/><rect x="0" y="9" width="8" height="2" fill="#6a5438"/><rect x="0" y="14" width="5" height="23" fill="#6e6a60"/><rect x="0" y="13" width="6" height="2" fill="#4a4030"/><rect x="14" y="18.5" width="15.5" height="9" fill="#e4eef4"/><rect x="18" y="20" width="7" height="6" fill="#7fa4cc"/><rect x="14" y="18.5" width="15.5" height="0.8" fill="#8a7a60"/><rect x="14" y="27" width="15.5" height="0.8" fill="#8a7a60"/><rect x="6" y="25" width="8" height="3" fill="#ecd8b8"/><ellipse cx="8" cy="32" rx="4" ry="5" fill="#b0a498"/><ellipse cx="16" cy="33" rx="3" ry="4" fill="#e0c8a8"/><rect x="-2" y="36" width="34" height="6" fill="#8a8078"/><rect x="-2" y="38.5" width="34" height="4" fill="#5a5650"/></g></defs><use href="#tg14" x="-0.53" y="-0.53" opacity="1"/><use href="#tg14" x="0.53" y="-0.53" opacity="0.5"/><use href="#tg14" x="-0.53" y="0.53" opacity="0.3333"/><use href="#tg14" x="0.53" y="0.53" opacity="0.25"/></svg><div class="nm"><div>antonio-secerovic-NOFdK1xOqkQ-unsplash.jpg</div><div>/Asset-Data/Demo/Images/1-apollon-Demo-Images/anto…</div></div><span class="c ot">Bild</span><span class="c sz">2.66 MB</span><span class="c ho">1631 mm</span><span class="c br">1223 …</span><span class="c d1">4. Juli 2023</span><span class="c d2">4. Juli 2023</span></div>
<div class="row" style="top:720px"><span class="cb"></span><svg class="th" viewBox="0 0 40 27" style="left:82px;top:11px;width:40px;height:27px;overflow:hidden"><defs><g id="tg15"><rect x="-2" y="-2" width="44" height="31" fill="#a9d2b8"/><ellipse cx="8" cy="3" rx="5" ry="3" fill="#d8ece4"/><ellipse cx="28" cy="3" rx="6" ry="3" fill="#c4e0d0"/><rect x="0" y="0" width="1.8" height="27" fill="#3a4038"/><rect x="10" y="0" width="1.4" height="27" fill="#2f4a3c"/><rect x="22" y="0" width="1.4" height="27" fill="#2f4a3c"/><rect x="36" y="0" width="1.6" height="27" fill="#3a4a40"/></g></defs><use href="#tg15" x="-0.31" y="-0.31" opacity="1"/><use href="#tg15" x="0.31" y="-0.31" opacity="0.5"/><use href="#tg15" x="-0.31" y="0.31" opacity="0.3333"/><use href="#tg15" x="0.31" y="0.31" opacity="0.25"/></svg><div class="nm"><div>arlington-research-Kz8nHVg_tGI-unsplash.jpg</div><div></div></div><span class="c ot"></span><span class="c sz"></span><span class="c ho"></span><span class="c br"></span><span class="c d1"></span><span class="c d2"></span></div>
</div>
<div class="abs" style="left:1274px;top:48px;width:17px;height:736px;background:#f1f1f1"></div>
<div class="abs" style="left:1276px;top:65px;width:13px;height:268px;background:#c1c1c1"></div>
<div class="abs" style="left:0;top:784px;width:1274px;height:17px;background:#f1f1f1"></div>
<div class="abs" style="left:1274px;top:784px;width:17px;height:17px;background:#dcdcdc"></div>
<div class="abs" style="left:17px;top:786px;width:672px;height:13px;background:#c1c1c1"></div>
<div class="abs" style="left:0;top:801px;width:1291px;height:1px;background:#d8d8d8"></div>
<svg style="left:0;top:0;width:1px;height:1px"><path d="M1278.800 58.800L1282.400 54.800L1286 58.800z" fill="#a3a3a3"/><path d="M1278.800 772.900L1282.400 777L1286 772.900z" fill="#505050"/>
<path d="M10.200 788.800L6 792.500L10.200 796.200z" fill="#a3a3a3"/><path d="M1264 789L1268 792.500L1264 796z" fill="#505050"/></svg>
</div>
<div id="bc">
<svg viewBox="0 0 16 16" style="left:12px;top:12px;width:16px;height:16px"><path fill="#3c3c3c" d="M14.10 8.10L14.01 9.06L15.86 9.95L14.96 12.15L13.01 11.47L12.24 12.39L11.50 13.00L12.18 14.94L9.99 15.85L9.09 14.00L7.90 14.10L6.94 14.01L6.05 15.86L3.85 14.96L4.53 13.01L3.61 12.24L3.00 11.50L1.06 12.18L0.15 9.99L2.00 9.09L1.90 7.90L1.99 6.94L0.14 6.05L1.04 3.85L2.99 4.53L3.76 3.61L4.50 3.00L3.82 1.06L6.01 0.15L6.91 2.00L8.10 1.90L9.06 1.99L9.95 0.14L12.15 1.04L11.47 2.99L12.39 3.76L13.00 4.50L14.94 3.82L15.85 6.01L14.00 6.91z" stroke="#3c3c3c" stroke-width=".6" stroke-linejoin="round"/><path d="M9.300 6.900L3 13.500" stroke="#e8e8e8" stroke-width="2.100" stroke-linecap="round"/><circle cx="9.600" cy="6.600" r="2.500" fill="#e8e8e8"/><path d="M9.200 7.100L3.200 13.300" stroke="#3c3c3c" stroke-width=".9" stroke-linecap="round"/><circle cx="9.500" cy="6.800" r="1.500" fill="#3c3c3c"/><path d="M10 6.200L12.200 4" stroke="#e8e8e8" stroke-width="1.300"/></svg>
<svg style="left:0;top:0;width:1px;height:1px"><path d="M42.80 14.90L48.20 20.00L42.80 25.10" fill="none" stroke="#3c3c3c" stroke-width="1.9"/></svg>
<svg style="left:0;top:0;width:1px;height:1px"><path d="M88.80 14.90L94.20 20.00L88.80 25.10" fill="none" stroke="#3c3c3c" stroke-width="1.9"/></svg>
<svg style="left:0;top:0;width:1px;height:1px"><path d="M185.90 14.90L191.30 20.00L185.90 25.10" fill="none" stroke="#3c3c3c" stroke-width="1.9"/></svg>
<svg style="left:0;top:0;width:1px;height:1px"><path d="M247.50 14.90L252.90 20.00L247.50 25.10" fill="none" stroke="#3c3c3c" stroke-width="1.9"/></svg>
<svg style="left:0;top:0;width:1px;height:1px"><path d="M340.90 14.90L346.30 20.00L340.90 25.10" fill="none" stroke="#3c3c3c" stroke-width="1.9"/></svg>
<svg style="left:0;top:0;width:1px;height:1px"><path d="M406.80 14.90L412.20 20.00L406.80 25.10" fill="none" stroke="#3c3c3c" stroke-width="1.9"/></svg>
<svg style="left:0;top:0;width:1px;height:1px"><path d="M480.70 14.90L486.10 20.00L480.70 25.10" fill="none" stroke="#3c3c3c" stroke-width="1.9"/></svg>
<svg viewBox="0 0 14 4" style="left:61px;top:17px;width:14px;height:4px" fill="#3c3c3c"><circle cx="1.800" cy="2" r="1.750"/><circle cx="6.900" cy="2" r="1.750"/><circle cx="12.050" cy="2" r="1.750"/></svg>
<div class="t" style="left:108.30000000000001px;top:13px">File System</div>
<div class="t" style="left:205px;top:13px">MAM</div>
<div class="t" style="left:267px;top:13px">Asset-Data</div>
<div class="t" style="left:360px;top:13px">Demo</div>
<div class="t" style="left:426px;top:13px">Images</div>
<div class="t blue" style="left:500.5px;top:13px">1-apollon-Demo-Images</div>
</div>
<div id="redge"></div>
</body></html>
